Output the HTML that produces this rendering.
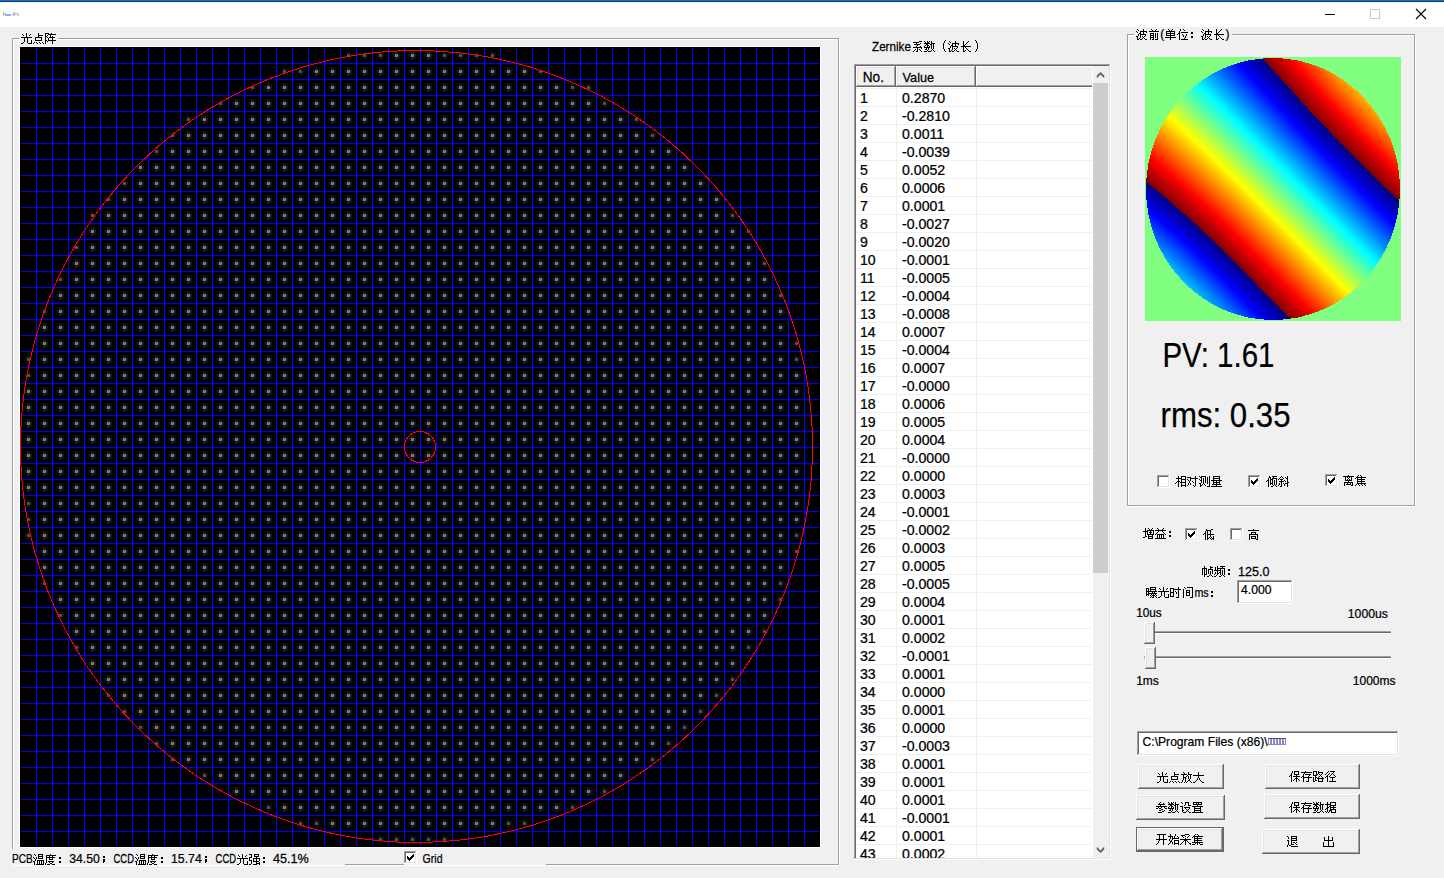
<!DOCTYPE html>
<html><head><meta charset="utf-8"><title>spot</title>
<style>
html,body{margin:0;padding:0;width:1444px;height:878px;overflow:hidden;background:#f0f0f0}
svg{display:block}
text{font-family:"Liberation Sans",sans-serif;stroke:currentColor;stroke-width:0.25px}
</style></head><body>
<svg width="1444" height="878" viewBox="0 0 1444 878" shape-rendering="crispEdges">
<defs><radialGradient id="glw"><stop offset="0" stop-color="#202020"/><stop offset="1" stop-color="#000"/></radialGradient><radialGradient id="glw2"><stop offset="0" stop-color="#141414"/><stop offset="1" stop-color="#000"/></radialGradient><pattern id="sp" x="20" y="47" width="16" height="16" patternUnits="userSpaceOnUse">
<circle cx="8.5" cy="8.5" r="5.5" fill="url(#glw)" shape-rendering="geometricPrecision"/>
<rect x="5" y="7" width="1" height="3" fill="#222222"/><rect x="11" y="7" width="1" height="3" fill="#222222"/>
<rect x="7" y="5" width="3" height="1" fill="#202020"/><rect x="7" y="11" width="3" height="1" fill="#202020"/>
<rect x="7" y="7" width="3" height="3" fill="#767676"/><rect x="8" y="7" width="1" height="3" fill="#828282"/><rect x="7" y="8" width="3" height="1" fill="#828282"/>
</pattern><pattern id="sp2" x="20" y="47" width="16" height="16" patternUnits="userSpaceOnUse">
<circle cx="8.5" cy="8.5" r="5.5" fill="url(#glw2)" shape-rendering="geometricPrecision"/>
<rect x="5" y="7" width="1" height="3" fill="#161616"/><rect x="11" y="7" width="1" height="3" fill="#161616"/>
<rect x="7" y="5" width="3" height="1" fill="#141414"/><rect x="7" y="11" width="3" height="1" fill="#141414"/>
<rect x="7" y="7" width="3" height="3" fill="#484848"/><rect x="8" y="7" width="1" height="3" fill="#545454"/><rect x="7" y="8" width="3" height="1" fill="#545454"/>
</pattern><clipPath id="ell"><rect x="1145" y="57" width="256" height="264"/></clipPath><linearGradient id="j0" gradientUnits="userSpaceOnUse" x1="1234.48" y1="27.61" x2="1108.99" y2="151.21" spreadMethod="repeat"><stop offset="0" stop-color="#000080"/><stop offset="0.125" stop-color="#0000ff"/><stop offset="0.375" stop-color="#00ffff"/><stop offset="0.625" stop-color="#ffff00"/><stop offset="0.875" stop-color="#ff0000"/><stop offset="1" stop-color="#800000"/></linearGradient><linearGradient id="j1" gradientUnits="userSpaceOnUse" x1="1237.16" y1="30.58" x2="1112.10" y2="153.77" spreadMethod="repeat"><stop offset="0" stop-color="#000080"/><stop offset="0.125" stop-color="#0000ff"/><stop offset="0.375" stop-color="#00ffff"/><stop offset="0.625" stop-color="#ffff00"/><stop offset="0.875" stop-color="#ff0000"/><stop offset="1" stop-color="#800000"/></linearGradient><linearGradient id="j2" gradientUnits="userSpaceOnUse" x1="1239.85" y1="33.55" x2="1115.20" y2="156.32" spreadMethod="repeat"><stop offset="0" stop-color="#000080"/><stop offset="0.125" stop-color="#0000ff"/><stop offset="0.375" stop-color="#00ffff"/><stop offset="0.625" stop-color="#ffff00"/><stop offset="0.875" stop-color="#ff0000"/><stop offset="1" stop-color="#800000"/></linearGradient><linearGradient id="j3" gradientUnits="userSpaceOnUse" x1="1242.54" y1="36.51" x2="1118.31" y2="158.88" spreadMethod="repeat"><stop offset="0" stop-color="#000080"/><stop offset="0.125" stop-color="#0000ff"/><stop offset="0.375" stop-color="#00ffff"/><stop offset="0.625" stop-color="#ffff00"/><stop offset="0.875" stop-color="#ff0000"/><stop offset="1" stop-color="#800000"/></linearGradient><linearGradient id="j4" gradientUnits="userSpaceOnUse" x1="1245.23" y1="39.48" x2="1121.41" y2="161.44" spreadMethod="repeat"><stop offset="0" stop-color="#000080"/><stop offset="0.125" stop-color="#0000ff"/><stop offset="0.375" stop-color="#00ffff"/><stop offset="0.625" stop-color="#ffff00"/><stop offset="0.875" stop-color="#ff0000"/><stop offset="1" stop-color="#800000"/></linearGradient><linearGradient id="j5" gradientUnits="userSpaceOnUse" x1="1247.92" y1="42.44" x2="1124.52" y2="163.99" spreadMethod="repeat"><stop offset="0" stop-color="#000080"/><stop offset="0.125" stop-color="#0000ff"/><stop offset="0.375" stop-color="#00ffff"/><stop offset="0.625" stop-color="#ffff00"/><stop offset="0.875" stop-color="#ff0000"/><stop offset="1" stop-color="#800000"/></linearGradient><linearGradient id="j6" gradientUnits="userSpaceOnUse" x1="1250.61" y1="45.41" x2="1127.62" y2="166.55" spreadMethod="repeat"><stop offset="0" stop-color="#000080"/><stop offset="0.125" stop-color="#0000ff"/><stop offset="0.375" stop-color="#00ffff"/><stop offset="0.625" stop-color="#ffff00"/><stop offset="0.875" stop-color="#ff0000"/><stop offset="1" stop-color="#800000"/></linearGradient><linearGradient id="j7" gradientUnits="userSpaceOnUse" x1="1253.30" y1="48.38" x2="1130.73" y2="169.11" spreadMethod="repeat"><stop offset="0" stop-color="#000080"/><stop offset="0.125" stop-color="#0000ff"/><stop offset="0.375" stop-color="#00ffff"/><stop offset="0.625" stop-color="#ffff00"/><stop offset="0.875" stop-color="#ff0000"/><stop offset="1" stop-color="#800000"/></linearGradient><linearGradient id="j8" gradientUnits="userSpaceOnUse" x1="1255.99" y1="51.34" x2="1133.83" y2="171.66" spreadMethod="repeat"><stop offset="0" stop-color="#000080"/><stop offset="0.125" stop-color="#0000ff"/><stop offset="0.375" stop-color="#00ffff"/><stop offset="0.625" stop-color="#ffff00"/><stop offset="0.875" stop-color="#ff0000"/><stop offset="1" stop-color="#800000"/></linearGradient><linearGradient id="j9" gradientUnits="userSpaceOnUse" x1="1258.68" y1="54.31" x2="1136.94" y2="174.22" spreadMethod="repeat"><stop offset="0" stop-color="#000080"/><stop offset="0.125" stop-color="#0000ff"/><stop offset="0.375" stop-color="#00ffff"/><stop offset="0.625" stop-color="#ffff00"/><stop offset="0.875" stop-color="#ff0000"/><stop offset="1" stop-color="#800000"/></linearGradient><linearGradient id="j10" gradientUnits="userSpaceOnUse" x1="1261.36" y1="57.28" x2="1140.04" y2="176.78" spreadMethod="repeat"><stop offset="0" stop-color="#000080"/><stop offset="0.125" stop-color="#0000ff"/><stop offset="0.375" stop-color="#00ffff"/><stop offset="0.625" stop-color="#ffff00"/><stop offset="0.875" stop-color="#ff0000"/><stop offset="1" stop-color="#800000"/></linearGradient><linearGradient id="j11" gradientUnits="userSpaceOnUse" x1="1264.05" y1="60.24" x2="1143.15" y2="179.33" spreadMethod="repeat"><stop offset="0" stop-color="#000080"/><stop offset="0.125" stop-color="#0000ff"/><stop offset="0.375" stop-color="#00ffff"/><stop offset="0.625" stop-color="#ffff00"/><stop offset="0.875" stop-color="#ff0000"/><stop offset="1" stop-color="#800000"/></linearGradient><linearGradient id="j12" gradientUnits="userSpaceOnUse" x1="1266.74" y1="63.21" x2="1146.25" y2="181.89" spreadMethod="repeat"><stop offset="0" stop-color="#000080"/><stop offset="0.125" stop-color="#0000ff"/><stop offset="0.375" stop-color="#00ffff"/><stop offset="0.625" stop-color="#ffff00"/><stop offset="0.875" stop-color="#ff0000"/><stop offset="1" stop-color="#800000"/></linearGradient><linearGradient id="j13" gradientUnits="userSpaceOnUse" x1="1269.43" y1="66.18" x2="1149.36" y2="184.45" spreadMethod="repeat"><stop offset="0" stop-color="#000080"/><stop offset="0.125" stop-color="#0000ff"/><stop offset="0.375" stop-color="#00ffff"/><stop offset="0.625" stop-color="#ffff00"/><stop offset="0.875" stop-color="#ff0000"/><stop offset="1" stop-color="#800000"/></linearGradient><linearGradient id="j14" gradientUnits="userSpaceOnUse" x1="1272.12" y1="69.14" x2="1152.46" y2="187.00" spreadMethod="repeat"><stop offset="0" stop-color="#000080"/><stop offset="0.125" stop-color="#0000ff"/><stop offset="0.375" stop-color="#00ffff"/><stop offset="0.625" stop-color="#ffff00"/><stop offset="0.875" stop-color="#ff0000"/><stop offset="1" stop-color="#800000"/></linearGradient><linearGradient id="j15" gradientUnits="userSpaceOnUse" x1="1274.81" y1="72.11" x2="1155.57" y2="189.56" spreadMethod="repeat"><stop offset="0" stop-color="#000080"/><stop offset="0.125" stop-color="#0000ff"/><stop offset="0.375" stop-color="#00ffff"/><stop offset="0.625" stop-color="#ffff00"/><stop offset="0.875" stop-color="#ff0000"/><stop offset="1" stop-color="#800000"/></linearGradient><linearGradient id="j16" gradientUnits="userSpaceOnUse" x1="1277.50" y1="75.08" x2="1158.68" y2="192.11" spreadMethod="repeat"><stop offset="0" stop-color="#000080"/><stop offset="0.125" stop-color="#0000ff"/><stop offset="0.375" stop-color="#00ffff"/><stop offset="0.625" stop-color="#ffff00"/><stop offset="0.875" stop-color="#ff0000"/><stop offset="1" stop-color="#800000"/></linearGradient><linearGradient id="j17" gradientUnits="userSpaceOnUse" x1="1280.19" y1="78.04" x2="1161.78" y2="194.67" spreadMethod="repeat"><stop offset="0" stop-color="#000080"/><stop offset="0.125" stop-color="#0000ff"/><stop offset="0.375" stop-color="#00ffff"/><stop offset="0.625" stop-color="#ffff00"/><stop offset="0.875" stop-color="#ff0000"/><stop offset="1" stop-color="#800000"/></linearGradient><linearGradient id="j18" gradientUnits="userSpaceOnUse" x1="1282.88" y1="81.01" x2="1164.89" y2="197.23" spreadMethod="repeat"><stop offset="0" stop-color="#000080"/><stop offset="0.125" stop-color="#0000ff"/><stop offset="0.375" stop-color="#00ffff"/><stop offset="0.625" stop-color="#ffff00"/><stop offset="0.875" stop-color="#ff0000"/><stop offset="1" stop-color="#800000"/></linearGradient><linearGradient id="j19" gradientUnits="userSpaceOnUse" x1="1285.56" y1="83.98" x2="1167.94" y2="199.83" spreadMethod="repeat"><stop offset="0" stop-color="#000080"/><stop offset="0.125" stop-color="#0000ff"/><stop offset="0.375" stop-color="#00ffff"/><stop offset="0.625" stop-color="#ffff00"/><stop offset="0.875" stop-color="#ff0000"/><stop offset="1" stop-color="#800000"/></linearGradient><linearGradient id="j20" gradientUnits="userSpaceOnUse" x1="1288.25" y1="86.94" x2="1170.93" y2="202.50" spreadMethod="repeat"><stop offset="0" stop-color="#000080"/><stop offset="0.125" stop-color="#0000ff"/><stop offset="0.375" stop-color="#00ffff"/><stop offset="0.625" stop-color="#ffff00"/><stop offset="0.875" stop-color="#ff0000"/><stop offset="1" stop-color="#800000"/></linearGradient><linearGradient id="j21" gradientUnits="userSpaceOnUse" x1="1290.94" y1="89.91" x2="1173.92" y2="205.17" spreadMethod="repeat"><stop offset="0" stop-color="#000080"/><stop offset="0.125" stop-color="#0000ff"/><stop offset="0.375" stop-color="#00ffff"/><stop offset="0.625" stop-color="#ffff00"/><stop offset="0.875" stop-color="#ff0000"/><stop offset="1" stop-color="#800000"/></linearGradient><linearGradient id="j22" gradientUnits="userSpaceOnUse" x1="1293.63" y1="92.88" x2="1176.91" y2="207.84" spreadMethod="repeat"><stop offset="0" stop-color="#000080"/><stop offset="0.125" stop-color="#0000ff"/><stop offset="0.375" stop-color="#00ffff"/><stop offset="0.625" stop-color="#ffff00"/><stop offset="0.875" stop-color="#ff0000"/><stop offset="1" stop-color="#800000"/></linearGradient><linearGradient id="j23" gradientUnits="userSpaceOnUse" x1="1296.32" y1="95.84" x2="1179.90" y2="210.51" spreadMethod="repeat"><stop offset="0" stop-color="#000080"/><stop offset="0.125" stop-color="#0000ff"/><stop offset="0.375" stop-color="#00ffff"/><stop offset="0.625" stop-color="#ffff00"/><stop offset="0.875" stop-color="#ff0000"/><stop offset="1" stop-color="#800000"/></linearGradient><linearGradient id="j24" gradientUnits="userSpaceOnUse" x1="1299.01" y1="98.81" x2="1182.89" y2="213.18" spreadMethod="repeat"><stop offset="0" stop-color="#000080"/><stop offset="0.125" stop-color="#0000ff"/><stop offset="0.375" stop-color="#00ffff"/><stop offset="0.625" stop-color="#ffff00"/><stop offset="0.875" stop-color="#ff0000"/><stop offset="1" stop-color="#800000"/></linearGradient><linearGradient id="j25" gradientUnits="userSpaceOnUse" x1="1301.65" y1="101.83" x2="1185.89" y2="215.84" spreadMethod="repeat"><stop offset="0" stop-color="#000080"/><stop offset="0.125" stop-color="#0000ff"/><stop offset="0.375" stop-color="#00ffff"/><stop offset="0.625" stop-color="#ffff00"/><stop offset="0.875" stop-color="#ff0000"/><stop offset="1" stop-color="#800000"/></linearGradient><linearGradient id="j26" gradientUnits="userSpaceOnUse" x1="1304.28" y1="104.85" x2="1188.90" y2="218.50" spreadMethod="repeat"><stop offset="0" stop-color="#000080"/><stop offset="0.125" stop-color="#0000ff"/><stop offset="0.375" stop-color="#00ffff"/><stop offset="0.625" stop-color="#ffff00"/><stop offset="0.875" stop-color="#ff0000"/><stop offset="1" stop-color="#800000"/></linearGradient><linearGradient id="j27" gradientUnits="userSpaceOnUse" x1="1306.91" y1="107.87" x2="1191.90" y2="221.15" spreadMethod="repeat"><stop offset="0" stop-color="#000080"/><stop offset="0.125" stop-color="#0000ff"/><stop offset="0.375" stop-color="#00ffff"/><stop offset="0.625" stop-color="#ffff00"/><stop offset="0.875" stop-color="#ff0000"/><stop offset="1" stop-color="#800000"/></linearGradient><linearGradient id="j28" gradientUnits="userSpaceOnUse" x1="1309.55" y1="110.89" x2="1194.91" y2="223.81" spreadMethod="repeat"><stop offset="0" stop-color="#000080"/><stop offset="0.125" stop-color="#0000ff"/><stop offset="0.375" stop-color="#00ffff"/><stop offset="0.625" stop-color="#ffff00"/><stop offset="0.875" stop-color="#ff0000"/><stop offset="1" stop-color="#800000"/></linearGradient><linearGradient id="j29" gradientUnits="userSpaceOnUse" x1="1312.31" y1="113.78" x2="1197.91" y2="226.46" spreadMethod="repeat"><stop offset="0" stop-color="#000080"/><stop offset="0.125" stop-color="#0000ff"/><stop offset="0.375" stop-color="#00ffff"/><stop offset="0.625" stop-color="#ffff00"/><stop offset="0.875" stop-color="#ff0000"/><stop offset="1" stop-color="#800000"/></linearGradient><linearGradient id="j30" gradientUnits="userSpaceOnUse" x1="1315.10" y1="116.65" x2="1200.92" y2="229.12" spreadMethod="repeat"><stop offset="0" stop-color="#000080"/><stop offset="0.125" stop-color="#0000ff"/><stop offset="0.375" stop-color="#00ffff"/><stop offset="0.625" stop-color="#ffff00"/><stop offset="0.875" stop-color="#ff0000"/><stop offset="1" stop-color="#800000"/></linearGradient><linearGradient id="j31" gradientUnits="userSpaceOnUse" x1="1317.88" y1="119.52" x2="1203.82" y2="231.87" spreadMethod="repeat"><stop offset="0" stop-color="#000080"/><stop offset="0.125" stop-color="#0000ff"/><stop offset="0.375" stop-color="#00ffff"/><stop offset="0.625" stop-color="#ffff00"/><stop offset="0.875" stop-color="#ff0000"/><stop offset="1" stop-color="#800000"/></linearGradient><linearGradient id="j32" gradientUnits="userSpaceOnUse" x1="1320.67" y1="122.39" x2="1206.67" y2="234.68" spreadMethod="repeat"><stop offset="0" stop-color="#000080"/><stop offset="0.125" stop-color="#0000ff"/><stop offset="0.375" stop-color="#00ffff"/><stop offset="0.625" stop-color="#ffff00"/><stop offset="0.875" stop-color="#ff0000"/><stop offset="1" stop-color="#800000"/></linearGradient><linearGradient id="j33" gradientUnits="userSpaceOnUse" x1="1323.46" y1="125.26" x2="1209.52" y2="237.49" spreadMethod="repeat"><stop offset="0" stop-color="#000080"/><stop offset="0.125" stop-color="#0000ff"/><stop offset="0.375" stop-color="#00ffff"/><stop offset="0.625" stop-color="#ffff00"/><stop offset="0.875" stop-color="#ff0000"/><stop offset="1" stop-color="#800000"/></linearGradient><linearGradient id="j34" gradientUnits="userSpaceOnUse" x1="1326.25" y1="128.13" x2="1212.37" y2="240.29" spreadMethod="repeat"><stop offset="0" stop-color="#000080"/><stop offset="0.125" stop-color="#0000ff"/><stop offset="0.375" stop-color="#00ffff"/><stop offset="0.625" stop-color="#ffff00"/><stop offset="0.875" stop-color="#ff0000"/><stop offset="1" stop-color="#800000"/></linearGradient><linearGradient id="j35" gradientUnits="userSpaceOnUse" x1="1329.04" y1="131.00" x2="1215.22" y2="243.10" spreadMethod="repeat"><stop offset="0" stop-color="#000080"/><stop offset="0.125" stop-color="#0000ff"/><stop offset="0.375" stop-color="#00ffff"/><stop offset="0.625" stop-color="#ffff00"/><stop offset="0.875" stop-color="#ff0000"/><stop offset="1" stop-color="#800000"/></linearGradient><linearGradient id="j36" gradientUnits="userSpaceOnUse" x1="1331.83" y1="133.86" x2="1218.08" y2="245.91" spreadMethod="repeat"><stop offset="0" stop-color="#000080"/><stop offset="0.125" stop-color="#0000ff"/><stop offset="0.375" stop-color="#00ffff"/><stop offset="0.625" stop-color="#ffff00"/><stop offset="0.875" stop-color="#ff0000"/><stop offset="1" stop-color="#800000"/></linearGradient><linearGradient id="j37" gradientUnits="userSpaceOnUse" x1="1334.62" y1="136.73" x2="1220.93" y2="248.72" spreadMethod="repeat"><stop offset="0" stop-color="#000080"/><stop offset="0.125" stop-color="#0000ff"/><stop offset="0.375" stop-color="#00ffff"/><stop offset="0.625" stop-color="#ffff00"/><stop offset="0.875" stop-color="#ff0000"/><stop offset="1" stop-color="#800000"/></linearGradient><linearGradient id="j38" gradientUnits="userSpaceOnUse" x1="1337.40" y1="139.60" x2="1223.78" y2="251.52" spreadMethod="repeat"><stop offset="0" stop-color="#000080"/><stop offset="0.125" stop-color="#0000ff"/><stop offset="0.375" stop-color="#00ffff"/><stop offset="0.625" stop-color="#ffff00"/><stop offset="0.875" stop-color="#ff0000"/><stop offset="1" stop-color="#800000"/></linearGradient><linearGradient id="j39" gradientUnits="userSpaceOnUse" x1="1340.19" y1="142.47" x2="1226.63" y2="254.33" spreadMethod="repeat"><stop offset="0" stop-color="#000080"/><stop offset="0.125" stop-color="#0000ff"/><stop offset="0.375" stop-color="#00ffff"/><stop offset="0.625" stop-color="#ffff00"/><stop offset="0.875" stop-color="#ff0000"/><stop offset="1" stop-color="#800000"/></linearGradient><linearGradient id="j40" gradientUnits="userSpaceOnUse" x1="1342.98" y1="145.34" x2="1229.48" y2="257.14" spreadMethod="repeat"><stop offset="0" stop-color="#000080"/><stop offset="0.125" stop-color="#0000ff"/><stop offset="0.375" stop-color="#00ffff"/><stop offset="0.625" stop-color="#ffff00"/><stop offset="0.875" stop-color="#ff0000"/><stop offset="1" stop-color="#800000"/></linearGradient><linearGradient id="j41" gradientUnits="userSpaceOnUse" x1="1345.77" y1="148.21" x2="1232.33" y2="259.94" spreadMethod="repeat"><stop offset="0" stop-color="#000080"/><stop offset="0.125" stop-color="#0000ff"/><stop offset="0.375" stop-color="#00ffff"/><stop offset="0.625" stop-color="#ffff00"/><stop offset="0.875" stop-color="#ff0000"/><stop offset="1" stop-color="#800000"/></linearGradient><linearGradient id="j42" gradientUnits="userSpaceOnUse" x1="1348.58" y1="151.05" x2="1235.18" y2="262.75" spreadMethod="repeat"><stop offset="0" stop-color="#000080"/><stop offset="0.125" stop-color="#0000ff"/><stop offset="0.375" stop-color="#00ffff"/><stop offset="0.625" stop-color="#ffff00"/><stop offset="0.875" stop-color="#ff0000"/><stop offset="1" stop-color="#800000"/></linearGradient><linearGradient id="j43" gradientUnits="userSpaceOnUse" x1="1351.42" y1="153.87" x2="1238.03" y2="265.56" spreadMethod="repeat"><stop offset="0" stop-color="#000080"/><stop offset="0.125" stop-color="#0000ff"/><stop offset="0.375" stop-color="#00ffff"/><stop offset="0.625" stop-color="#ffff00"/><stop offset="0.875" stop-color="#ff0000"/><stop offset="1" stop-color="#800000"/></linearGradient><linearGradient id="j44" gradientUnits="userSpaceOnUse" x1="1354.26" y1="156.68" x2="1240.85" y2="268.39" spreadMethod="repeat"><stop offset="0" stop-color="#000080"/><stop offset="0.125" stop-color="#0000ff"/><stop offset="0.375" stop-color="#00ffff"/><stop offset="0.625" stop-color="#ffff00"/><stop offset="0.875" stop-color="#ff0000"/><stop offset="1" stop-color="#800000"/></linearGradient><linearGradient id="j45" gradientUnits="userSpaceOnUse" x1="1357.10" y1="159.50" x2="1243.64" y2="271.26" spreadMethod="repeat"><stop offset="0" stop-color="#000080"/><stop offset="0.125" stop-color="#0000ff"/><stop offset="0.375" stop-color="#00ffff"/><stop offset="0.625" stop-color="#ffff00"/><stop offset="0.875" stop-color="#ff0000"/><stop offset="1" stop-color="#800000"/></linearGradient><linearGradient id="j46" gradientUnits="userSpaceOnUse" x1="1359.95" y1="162.32" x2="1246.43" y2="274.13" spreadMethod="repeat"><stop offset="0" stop-color="#000080"/><stop offset="0.125" stop-color="#0000ff"/><stop offset="0.375" stop-color="#00ffff"/><stop offset="0.625" stop-color="#ffff00"/><stop offset="0.875" stop-color="#ff0000"/><stop offset="1" stop-color="#800000"/></linearGradient><linearGradient id="j47" gradientUnits="userSpaceOnUse" x1="1362.79" y1="165.13" x2="1249.22" y2="277.00" spreadMethod="repeat"><stop offset="0" stop-color="#000080"/><stop offset="0.125" stop-color="#0000ff"/><stop offset="0.375" stop-color="#00ffff"/><stop offset="0.625" stop-color="#ffff00"/><stop offset="0.875" stop-color="#ff0000"/><stop offset="1" stop-color="#800000"/></linearGradient><linearGradient id="j48" gradientUnits="userSpaceOnUse" x1="1365.63" y1="167.94" x2="1252.01" y2="279.86" spreadMethod="repeat"><stop offset="0" stop-color="#000080"/><stop offset="0.125" stop-color="#0000ff"/><stop offset="0.375" stop-color="#00ffff"/><stop offset="0.625" stop-color="#ffff00"/><stop offset="0.875" stop-color="#ff0000"/><stop offset="1" stop-color="#800000"/></linearGradient><linearGradient id="j49" gradientUnits="userSpaceOnUse" x1="1368.48" y1="170.76" x2="1254.80" y2="282.73" spreadMethod="repeat"><stop offset="0" stop-color="#000080"/><stop offset="0.125" stop-color="#0000ff"/><stop offset="0.375" stop-color="#00ffff"/><stop offset="0.625" stop-color="#ffff00"/><stop offset="0.875" stop-color="#ff0000"/><stop offset="1" stop-color="#800000"/></linearGradient><linearGradient id="j50" gradientUnits="userSpaceOnUse" x1="1371.32" y1="173.57" x2="1257.59" y2="285.60" spreadMethod="repeat"><stop offset="0" stop-color="#000080"/><stop offset="0.125" stop-color="#0000ff"/><stop offset="0.375" stop-color="#00ffff"/><stop offset="0.625" stop-color="#ffff00"/><stop offset="0.875" stop-color="#ff0000"/><stop offset="1" stop-color="#800000"/></linearGradient><linearGradient id="j51" gradientUnits="userSpaceOnUse" x1="1374.17" y1="176.38" x2="1260.38" y2="288.47" spreadMethod="repeat"><stop offset="0" stop-color="#000080"/><stop offset="0.125" stop-color="#0000ff"/><stop offset="0.375" stop-color="#00ffff"/><stop offset="0.625" stop-color="#ffff00"/><stop offset="0.875" stop-color="#ff0000"/><stop offset="1" stop-color="#800000"/></linearGradient><linearGradient id="j52" gradientUnits="userSpaceOnUse" x1="1377.01" y1="179.20" x2="1263.17" y2="291.34" spreadMethod="repeat"><stop offset="0" stop-color="#000080"/><stop offset="0.125" stop-color="#0000ff"/><stop offset="0.375" stop-color="#00ffff"/><stop offset="0.625" stop-color="#ffff00"/><stop offset="0.875" stop-color="#ff0000"/><stop offset="1" stop-color="#800000"/></linearGradient><linearGradient id="j53" gradientUnits="userSpaceOnUse" x1="1379.86" y1="182.01" x2="1265.95" y2="294.20" spreadMethod="repeat"><stop offset="0" stop-color="#000080"/><stop offset="0.125" stop-color="#0000ff"/><stop offset="0.375" stop-color="#00ffff"/><stop offset="0.625" stop-color="#ffff00"/><stop offset="0.875" stop-color="#ff0000"/><stop offset="1" stop-color="#800000"/></linearGradient><linearGradient id="j54" gradientUnits="userSpaceOnUse" x1="1382.70" y1="184.82" x2="1268.74" y2="297.07" spreadMethod="repeat"><stop offset="0" stop-color="#000080"/><stop offset="0.125" stop-color="#0000ff"/><stop offset="0.375" stop-color="#00ffff"/><stop offset="0.625" stop-color="#ffff00"/><stop offset="0.875" stop-color="#ff0000"/><stop offset="1" stop-color="#800000"/></linearGradient><linearGradient id="j55" gradientUnits="userSpaceOnUse" x1="1385.55" y1="187.64" x2="1271.53" y2="299.94" spreadMethod="repeat"><stop offset="0" stop-color="#000080"/><stop offset="0.125" stop-color="#0000ff"/><stop offset="0.375" stop-color="#00ffff"/><stop offset="0.625" stop-color="#ffff00"/><stop offset="0.875" stop-color="#ff0000"/><stop offset="1" stop-color="#800000"/></linearGradient><linearGradient id="j56" gradientUnits="userSpaceOnUse" x1="1388.39" y1="190.45" x2="1274.32" y2="302.81" spreadMethod="repeat"><stop offset="0" stop-color="#000080"/><stop offset="0.125" stop-color="#0000ff"/><stop offset="0.375" stop-color="#00ffff"/><stop offset="0.625" stop-color="#ffff00"/><stop offset="0.875" stop-color="#ff0000"/><stop offset="1" stop-color="#800000"/></linearGradient><linearGradient id="j57" gradientUnits="userSpaceOnUse" x1="1391.24" y1="193.26" x2="1277.11" y2="305.67" spreadMethod="repeat"><stop offset="0" stop-color="#000080"/><stop offset="0.125" stop-color="#0000ff"/><stop offset="0.375" stop-color="#00ffff"/><stop offset="0.625" stop-color="#ffff00"/><stop offset="0.875" stop-color="#ff0000"/><stop offset="1" stop-color="#800000"/></linearGradient><linearGradient id="j58" gradientUnits="userSpaceOnUse" x1="1394.08" y1="196.08" x2="1279.90" y2="308.54" spreadMethod="repeat"><stop offset="0" stop-color="#000080"/><stop offset="0.125" stop-color="#0000ff"/><stop offset="0.375" stop-color="#00ffff"/><stop offset="0.625" stop-color="#ffff00"/><stop offset="0.875" stop-color="#ff0000"/><stop offset="1" stop-color="#800000"/></linearGradient><linearGradient id="j59" gradientUnits="userSpaceOnUse" x1="1396.93" y1="198.89" x2="1282.69" y2="311.41" spreadMethod="repeat"><stop offset="0" stop-color="#000080"/><stop offset="0.125" stop-color="#0000ff"/><stop offset="0.375" stop-color="#00ffff"/><stop offset="0.625" stop-color="#ffff00"/><stop offset="0.875" stop-color="#ff0000"/><stop offset="1" stop-color="#800000"/></linearGradient><linearGradient id="j60" gradientUnits="userSpaceOnUse" x1="1399.77" y1="201.70" x2="1285.48" y2="314.28" spreadMethod="repeat"><stop offset="0" stop-color="#000080"/><stop offset="0.125" stop-color="#0000ff"/><stop offset="0.375" stop-color="#00ffff"/><stop offset="0.625" stop-color="#ffff00"/><stop offset="0.875" stop-color="#ff0000"/><stop offset="1" stop-color="#800000"/></linearGradient><linearGradient id="j61" gradientUnits="userSpaceOnUse" x1="1402.61" y1="204.52" x2="1288.27" y2="317.14" spreadMethod="repeat"><stop offset="0" stop-color="#000080"/><stop offset="0.125" stop-color="#0000ff"/><stop offset="0.375" stop-color="#00ffff"/><stop offset="0.625" stop-color="#ffff00"/><stop offset="0.875" stop-color="#ff0000"/><stop offset="1" stop-color="#800000"/></linearGradient><linearGradient id="j62" gradientUnits="userSpaceOnUse" x1="1405.46" y1="207.33" x2="1291.06" y2="320.01" spreadMethod="repeat"><stop offset="0" stop-color="#000080"/><stop offset="0.125" stop-color="#0000ff"/><stop offset="0.375" stop-color="#00ffff"/><stop offset="0.625" stop-color="#ffff00"/><stop offset="0.875" stop-color="#ff0000"/><stop offset="1" stop-color="#800000"/></linearGradient><linearGradient id="j63" gradientUnits="userSpaceOnUse" x1="1408.30" y1="210.14" x2="1293.85" y2="322.88" spreadMethod="repeat"><stop offset="0" stop-color="#000080"/><stop offset="0.125" stop-color="#0000ff"/><stop offset="0.375" stop-color="#00ffff"/><stop offset="0.625" stop-color="#ffff00"/><stop offset="0.875" stop-color="#ff0000"/><stop offset="1" stop-color="#800000"/></linearGradient><linearGradient id="j64" gradientUnits="userSpaceOnUse" x1="1411.15" y1="212.95" x2="1296.64" y2="325.75" spreadMethod="repeat"><stop offset="0" stop-color="#000080"/><stop offset="0.125" stop-color="#0000ff"/><stop offset="0.375" stop-color="#00ffff"/><stop offset="0.625" stop-color="#ffff00"/><stop offset="0.875" stop-color="#ff0000"/><stop offset="1" stop-color="#800000"/></linearGradient><linearGradient id="j65" gradientUnits="userSpaceOnUse" x1="1413.99" y1="215.77" x2="1299.43" y2="328.61" spreadMethod="repeat"><stop offset="0" stop-color="#000080"/><stop offset="0.125" stop-color="#0000ff"/><stop offset="0.375" stop-color="#00ffff"/><stop offset="0.625" stop-color="#ffff00"/><stop offset="0.875" stop-color="#ff0000"/><stop offset="1" stop-color="#800000"/></linearGradient><linearGradient id="j66" gradientUnits="userSpaceOnUse" x1="1416.84" y1="218.58" x2="1302.22" y2="331.48" spreadMethod="repeat"><stop offset="0" stop-color="#000080"/><stop offset="0.125" stop-color="#0000ff"/><stop offset="0.375" stop-color="#00ffff"/><stop offset="0.625" stop-color="#ffff00"/><stop offset="0.875" stop-color="#ff0000"/><stop offset="1" stop-color="#800000"/></linearGradient><linearGradient id="j67" gradientUnits="userSpaceOnUse" x1="1419.68" y1="221.39" x2="1305.00" y2="334.35" spreadMethod="repeat"><stop offset="0" stop-color="#000080"/><stop offset="0.125" stop-color="#0000ff"/><stop offset="0.375" stop-color="#00ffff"/><stop offset="0.625" stop-color="#ffff00"/><stop offset="0.875" stop-color="#ff0000"/><stop offset="1" stop-color="#800000"/></linearGradient><linearGradient id="j68" gradientUnits="userSpaceOnUse" x1="1422.53" y1="224.21" x2="1307.79" y2="337.22" spreadMethod="repeat"><stop offset="0" stop-color="#000080"/><stop offset="0.125" stop-color="#0000ff"/><stop offset="0.375" stop-color="#00ffff"/><stop offset="0.625" stop-color="#ffff00"/><stop offset="0.875" stop-color="#ff0000"/><stop offset="1" stop-color="#800000"/></linearGradient><linearGradient id="j69" gradientUnits="userSpaceOnUse" x1="1425.37" y1="227.02" x2="1310.58" y2="340.08" spreadMethod="repeat"><stop offset="0" stop-color="#000080"/><stop offset="0.125" stop-color="#0000ff"/><stop offset="0.375" stop-color="#00ffff"/><stop offset="0.625" stop-color="#ffff00"/><stop offset="0.875" stop-color="#ff0000"/><stop offset="1" stop-color="#800000"/></linearGradient><linearGradient id="j70" gradientUnits="userSpaceOnUse" x1="1428.22" y1="229.83" x2="1313.37" y2="342.95" spreadMethod="repeat"><stop offset="0" stop-color="#000080"/><stop offset="0.125" stop-color="#0000ff"/><stop offset="0.375" stop-color="#00ffff"/><stop offset="0.625" stop-color="#ffff00"/><stop offset="0.875" stop-color="#ff0000"/><stop offset="1" stop-color="#800000"/></linearGradient><linearGradient id="j71" gradientUnits="userSpaceOnUse" x1="1431.06" y1="232.65" x2="1316.16" y2="345.82" spreadMethod="repeat"><stop offset="0" stop-color="#000080"/><stop offset="0.125" stop-color="#0000ff"/><stop offset="0.375" stop-color="#00ffff"/><stop offset="0.625" stop-color="#ffff00"/><stop offset="0.875" stop-color="#ff0000"/><stop offset="1" stop-color="#800000"/></linearGradient></defs>
<rect x="0" y="0" width="1444" height="27" fill="#ffffff"/>
<rect x="0" y="0" width="1444" height="1" fill="#0a72cc"/>
<rect x="0" y="1" width="1444" height="1" fill="#1c3d5c"/>
<rect x="0" y="2" width="1444" height="1" fill="#f2f4f6"/>
<rect x="3" y="12" width="1" height="4" fill="#f3b27a"/>
<rect x="4" y="13" width="2" height="2" fill="#a9c4ee"/>
<rect x="5" y="14" width="6" height="2" fill="#8fb3ea"/>
<rect x="11" y="14" width="2" height="1" fill="#c6d8f4"/>
<rect x="13" y="12" width="2" height="4" fill="#a9c4ee"/>
<rect x="15" y="13" width="2" height="2" fill="#f3c08f"/>
<rect x="17" y="13" width="2" height="3" fill="#bcd2f2"/>
<rect x="1325" y="14" width="10" height="1" fill="#000000"/>
<rect x="1370.5" y="9.5" width="9" height="9" fill="none" stroke="#c8c8c8" stroke-width="1"/>
<path d="M1416 9L1426 19M1426 9L1416 19" stroke="#000" stroke-width="1.1" fill="none" shape-rendering="geometricPrecision"/>
<rect x="12" y="38" width="827" height="1" fill="#a0a0a0"/>
<rect x="12" y="38" width="1" height="827" fill="#a0a0a0"/>
<rect x="12" y="865" width="828" height="1" fill="#ffffff"/>
<rect x="839" y="38" width="1" height="828" fill="#ffffff"/>
<rect x="13" y="39" width="825" height="1" fill="#ffffff"/>
<rect x="13" y="39" width="1" height="825" fill="#ffffff"/>
<rect x="13" y="864" width="826" height="1" fill="#a0a0a0"/>
<rect x="838" y="39" width="1" height="826" fill="#a0a0a0"/>
<rect x="19" y="31" width="39" height="12" fill="#f0f0f0"/>
<rect x="19" y="46" width="802" height="802" fill="#ffffff"/>
<rect x="20" y="47" width="800" height="800" fill="#000000"/>
<path d="M388 47h48v16h-48zM308 63h224v16h-224zM260 79h304v16h-304zM228 95h368v16h-368zM196 111h432v16h-432zM180 127h464v16h-464zM164 143h512v16h-512zM132 159h560v16h-560zM132 175h576v16h-576zM116 191h608v16h-608zM100 207h624v16h-624zM84 223h656v16h-656zM84 239h672v16h-672zM68 255h688v16h-688zM68 271h704v16h-704zM52 287h720v16h-720zM52 303h736v16h-736zM36 319h752v16h-752zM36 335h752v16h-752zM36 351h752v16h-752zM36 367h768v16h-768zM20 383h784v16h-784zM20 399h784v16h-784zM20 415h784v16h-784zM20 431h784v16h-784zM20 447h784v16h-784zM20 463h784v16h-784zM20 479h784v16h-784zM36 495h768v16h-768zM36 511h768v16h-768zM36 527h752v16h-752zM36 543h752v16h-752zM36 559h752v16h-752zM52 575h720v16h-720zM52 591h720v16h-720zM68 607h704v16h-704zM68 623h688v16h-688zM84 639h656v16h-656zM84 655h656v16h-656zM100 671h624v16h-624zM116 687h592v16h-592zM132 703h560v16h-560zM148 719h528v16h-528zM164 735h496v16h-496zM180 751h464v16h-464zM212 767h416v16h-416zM228 783h368v16h-368zM276 799h288v16h-288zM324 815h176v16h-176z" fill="url(#sp)"/>
<path d="M340 47h48v16h-48zM436 47h64v16h-64zM276 63h32v16h-32zM532 63h16v16h-16zM244 79h16v16h-16zM564 79h32v16h-32zM212 95h16v16h-16zM596 95h16v16h-16zM180 111h16v16h-16zM628 111h16v16h-16zM164 127h16v16h-16zM644 127h16v16h-16zM148 143h16v16h-16zM116 175h16v16h-16zM100 191h16v16h-16zM84 207h16v16h-16zM724 207h16v16h-16zM740 223h16v16h-16zM68 239h16v16h-16zM756 255h16v16h-16zM52 271h16v16h-16zM772 287h16v16h-16zM36 303h16v16h-16zM788 335h16v16h-16zM20 351h16v16h-16zM788 351h16v16h-16zM20 367h16v16h-16zM20 495h16v16h-16zM20 511h16v16h-16zM20 527h16v16h-16zM788 527h16v16h-16zM788 543h16v16h-16zM36 575h16v16h-16zM772 575h16v16h-16zM772 591h16v16h-16zM52 607h16v16h-16zM756 623h16v16h-16zM68 639h16v16h-16zM740 639h16v16h-16zM724 671h16v16h-16zM100 687h16v16h-16zM708 687h16v16h-16zM116 703h16v16h-16zM692 703h16v16h-16zM132 719h16v16h-16zM676 719h16v16h-16zM148 735h16v16h-16zM660 735h16v16h-16zM164 751h16v16h-16zM644 751h16v16h-16zM196 767h16v16h-16zM596 783h16v16h-16zM260 799h16v16h-16zM564 799h16v16h-16zM292 815h32v16h-32zM500 815h32v16h-32zM372 831h80v16h-80z" fill="url(#sp2)"/>
<path d="M36 48h1v798h-1zM21 63h798v1h-798zM52 48h1v798h-1zM21 79h798v1h-798zM68 48h1v798h-1zM21 95h798v1h-798zM84 48h1v798h-1zM21 111h798v1h-798zM100 48h1v798h-1zM21 127h798v1h-798zM116 48h1v798h-1zM21 143h798v1h-798zM132 48h1v798h-1zM21 159h798v1h-798zM148 48h1v798h-1zM21 175h798v1h-798zM164 48h1v798h-1zM21 191h798v1h-798zM180 48h1v798h-1zM21 207h798v1h-798zM196 48h1v798h-1zM21 223h798v1h-798zM212 48h1v798h-1zM21 239h798v1h-798zM228 48h1v798h-1zM21 255h798v1h-798zM244 48h1v798h-1zM21 271h798v1h-798zM260 48h1v798h-1zM21 287h798v1h-798zM276 48h1v798h-1zM21 303h798v1h-798zM292 48h1v798h-1zM21 319h798v1h-798zM308 48h1v798h-1zM21 335h798v1h-798zM324 48h1v798h-1zM21 351h798v1h-798zM340 48h1v798h-1zM21 367h798v1h-798zM356 48h1v798h-1zM21 383h798v1h-798zM372 48h1v798h-1zM21 399h798v1h-798zM388 48h1v798h-1zM21 415h798v1h-798zM404 48h1v798h-1zM21 431h798v1h-798zM420 48h1v798h-1zM21 447h798v1h-798zM436 48h1v798h-1zM21 463h798v1h-798zM452 48h1v798h-1zM21 479h798v1h-798zM468 48h1v798h-1zM21 495h798v1h-798zM484 48h1v798h-1zM21 511h798v1h-798zM500 48h1v798h-1zM21 527h798v1h-798zM516 48h1v798h-1zM21 543h798v1h-798zM532 48h1v798h-1zM21 559h798v1h-798zM548 48h1v798h-1zM21 575h798v1h-798zM564 48h1v798h-1zM21 591h798v1h-798zM580 48h1v798h-1zM21 607h798v1h-798zM596 48h1v798h-1zM21 623h798v1h-798zM612 48h1v798h-1zM21 639h798v1h-798zM628 48h1v798h-1zM21 655h798v1h-798zM644 48h1v798h-1zM21 671h798v1h-798zM660 48h1v798h-1zM21 687h798v1h-798zM676 48h1v798h-1zM21 703h798v1h-798zM692 48h1v798h-1zM21 719h798v1h-798zM708 48h1v798h-1zM21 735h798v1h-798zM724 48h1v798h-1zM21 751h798v1h-798zM740 48h1v798h-1zM21 767h798v1h-798zM756 48h1v798h-1zM21 783h798v1h-798zM772 48h1v798h-1zM21 799h798v1h-798zM788 48h1v798h-1zM21 815h798v1h-798zM804 48h1v798h-1zM21 831h798v1h-798z" fill="#0000ff"/>
<circle cx="416.5" cy="446.5" r="396" fill="none" stroke="#ff0000" stroke-width="1"/>
<circle cx="420" cy="447" r="15.5" fill="none" stroke="#ff0000" stroke-width="1"/>
<rect x="12" y="849" width="333" height="16" fill="#f0f0f0"/>
<rect x="404" y="849" width="142" height="16" fill="#f0f0f0"/>
<rect x="404" y="851" width="13" height="13" fill="#ffffff"/>
<rect x="404" y="851" width="12" height="1" fill="#a0a0a0"/>
<rect x="404" y="851" width="1" height="12" fill="#a0a0a0"/>
<rect x="405" y="852" width="10" height="1" fill="#696969"/>
<rect x="405" y="852" width="1" height="10" fill="#696969"/>
<rect x="405" y="862" width="11" height="1" fill="#e3e3e3"/>
<rect x="415" y="852" width="1" height="11" fill="#e3e3e3"/>
<rect x="404" y="863" width="13" height="1" fill="#ffffff"/>
<rect x="416" y="851" width="1" height="13" fill="#ffffff"/>
<rect x="407" y="856" width="1" height="3" fill="#000"/>
<rect x="408" y="857" width="1" height="3" fill="#000"/>
<rect x="409" y="858" width="1" height="3" fill="#000"/>
<rect x="410" y="857" width="1" height="3" fill="#000"/>
<rect x="411" y="856" width="1" height="3" fill="#000"/>
<rect x="412" y="855" width="1" height="3" fill="#000"/>
<rect x="413" y="854" width="1" height="3" fill="#000"/>
<rect x="854" y="64" width="256" height="1" fill="#a0a0a0"/>
<rect x="854" y="64" width="1" height="795" fill="#a0a0a0"/>
<rect x="854" y="859" width="257" height="1" fill="#ffffff"/>
<rect x="1110" y="64" width="1" height="796" fill="#ffffff"/>
<rect x="855" y="65" width="254" height="1" fill="#696969"/>
<rect x="855" y="65" width="1" height="793" fill="#696969"/>
<rect x="855" y="858" width="255" height="1" fill="#e3e3e3"/>
<rect x="1109" y="65" width="1" height="794" fill="#e3e3e3"/>
<rect x="856" y="66" width="253" height="792" fill="#ffffff"/>
<rect x="856" y="66" width="40" height="21" fill="#f0f0f0"/>
<rect x="856" y="66" width="39" height="1" fill="#ffffff"/>
<rect x="856" y="66" width="1" height="20" fill="#ffffff"/>
<rect x="856" y="86" width="40" height="1" fill="#696969"/>
<rect x="895" y="66" width="1" height="21" fill="#696969"/>
<rect x="857" y="67" width="37" height="1" fill="#e3e3e3"/>
<rect x="857" y="67" width="1" height="18" fill="#e3e3e3"/>
<rect x="857" y="85" width="38" height="1" fill="#a0a0a0"/>
<rect x="894" y="67" width="1" height="19" fill="#a0a0a0"/>
<rect x="896" y="66" width="80" height="21" fill="#f0f0f0"/>
<rect x="896" y="66" width="79" height="1" fill="#ffffff"/>
<rect x="896" y="66" width="1" height="20" fill="#ffffff"/>
<rect x="896" y="86" width="80" height="1" fill="#696969"/>
<rect x="975" y="66" width="1" height="21" fill="#696969"/>
<rect x="897" y="67" width="77" height="1" fill="#e3e3e3"/>
<rect x="897" y="67" width="1" height="18" fill="#e3e3e3"/>
<rect x="897" y="85" width="78" height="1" fill="#a0a0a0"/>
<rect x="974" y="67" width="1" height="19" fill="#a0a0a0"/>
<rect x="976" y="66" width="116" height="21" fill="#f0f0f0"/>
<rect x="976" y="66" width="116" height="1" fill="#ffffff"/>
<rect x="976" y="66" width="1" height="20" fill="#ffffff"/>
<rect x="977" y="85" width="115" height="1" fill="#a0a0a0"/>
<rect x="976" y="86" width="116" height="1" fill="#696969"/>
<path d="M856 88h236v1h-236zM856 106h236v1h-236zM856 124h236v1h-236zM856 142h236v1h-236zM856 160h236v1h-236zM856 178h236v1h-236zM856 196h236v1h-236zM856 214h236v1h-236zM856 232h236v1h-236zM856 250h236v1h-236zM856 268h236v1h-236zM856 286h236v1h-236zM856 304h236v1h-236zM856 322h236v1h-236zM856 340h236v1h-236zM856 358h236v1h-236zM856 376h236v1h-236zM856 394h236v1h-236zM856 412h236v1h-236zM856 430h236v1h-236zM856 448h236v1h-236zM856 466h236v1h-236zM856 484h236v1h-236zM856 502h236v1h-236zM856 520h236v1h-236zM856 538h236v1h-236zM856 556h236v1h-236zM856 574h236v1h-236zM856 592h236v1h-236zM856 610h236v1h-236zM856 628h236v1h-236zM856 646h236v1h-236zM856 664h236v1h-236zM856 682h236v1h-236zM856 700h236v1h-236zM856 718h236v1h-236zM856 736h236v1h-236zM856 754h236v1h-236zM856 772h236v1h-236zM856 790h236v1h-236zM856 808h236v1h-236zM856 826h236v1h-236zM856 844h236v1h-236zM896 87h1v771h-1zM976 87h1v771h-1z" fill="#f0f0f0"/>
<text transform="translate(12.00 863.00) scale(0.7486 1)" font-size="13.44" fill="#000">PCB</text>
<text transform="translate(69.20 863.00) scale(0.9079 1)" font-size="13.44" fill="#000">34.50</text>
<text transform="translate(113.40 863.00) scale(0.7087 1)" font-size="13.44" fill="#000">CCD</text>
<text transform="translate(171.00 863.00) scale(0.9151 1)" font-size="13.44" fill="#000">15.74</text>
<text transform="translate(215.60 863.00) scale(0.7025 1)" font-size="13.44" fill="#000">CCD</text>
<text transform="translate(273.00 863.00) scale(0.9412 1)" font-size="13.44" fill="#000">45.1%</text>
<text transform="translate(422.60 863.20) scale(0.7815 1)" font-size="13.49" fill="#000">Grid</text>
<text transform="translate(872.00 51.10) scale(0.9050 1)" font-size="12.90" fill="#000">Zernike</text>
<text transform="translate(862.80 82.00) scale(0.9524 1)" font-size="14.29" fill="#000">No.</text>
<text transform="translate(902.60 82.00) scale(0.9679 1)" font-size="13.12" fill="#000">Value</text>
<svg x="856" y="87" width="236" height="771" overflow="hidden">
<text transform="translate(4.00 16.20) scale(1.0306 1)" font-size="13.72" fill="#000">1</text>
<text transform="translate(46.00 16.20) scale(1.0306 1)" font-size="13.72" fill="#000">0.2870</text>
<text transform="translate(4.00 34.20) scale(1.0306 1)" font-size="13.72" fill="#000">2</text>
<text transform="translate(46.00 34.20) scale(1.0306 1)" font-size="13.72" fill="#000">-0.2810</text>
<text transform="translate(4.00 52.20) scale(1.0306 1)" font-size="13.72" fill="#000">3</text>
<text transform="translate(46.00 52.20) scale(1.0306 1)" font-size="13.72" fill="#000">0.0011</text>
<text transform="translate(4.00 70.20) scale(1.0306 1)" font-size="13.72" fill="#000">4</text>
<text transform="translate(46.00 70.20) scale(1.0306 1)" font-size="13.72" fill="#000">-0.0039</text>
<text transform="translate(4.00 88.20) scale(1.0306 1)" font-size="13.72" fill="#000">5</text>
<text transform="translate(46.00 88.20) scale(1.0306 1)" font-size="13.72" fill="#000">0.0052</text>
<text transform="translate(4.00 106.20) scale(1.0306 1)" font-size="13.72" fill="#000">6</text>
<text transform="translate(46.00 106.20) scale(1.0306 1)" font-size="13.72" fill="#000">0.0006</text>
<text transform="translate(4.00 124.20) scale(1.0306 1)" font-size="13.72" fill="#000">7</text>
<text transform="translate(46.00 124.20) scale(1.0306 1)" font-size="13.72" fill="#000">0.0001</text>
<text transform="translate(4.00 142.20) scale(1.0306 1)" font-size="13.72" fill="#000">8</text>
<text transform="translate(46.00 142.20) scale(1.0306 1)" font-size="13.72" fill="#000">-0.0027</text>
<text transform="translate(4.00 160.20) scale(1.0306 1)" font-size="13.72" fill="#000">9</text>
<text transform="translate(46.00 160.20) scale(1.0306 1)" font-size="13.72" fill="#000">-0.0020</text>
<text transform="translate(4.00 178.20) scale(1.0306 1)" font-size="13.72" fill="#000">10</text>
<text transform="translate(46.00 178.20) scale(1.0306 1)" font-size="13.72" fill="#000">-0.0001</text>
<text transform="translate(4.00 196.20) scale(1.0306 1)" font-size="13.72" fill="#000">11</text>
<text transform="translate(46.00 196.20) scale(1.0306 1)" font-size="13.72" fill="#000">-0.0005</text>
<text transform="translate(4.00 214.20) scale(1.0306 1)" font-size="13.72" fill="#000">12</text>
<text transform="translate(46.00 214.20) scale(1.0306 1)" font-size="13.72" fill="#000">-0.0004</text>
<text transform="translate(4.00 232.20) scale(1.0306 1)" font-size="13.72" fill="#000">13</text>
<text transform="translate(46.00 232.20) scale(1.0306 1)" font-size="13.72" fill="#000">-0.0008</text>
<text transform="translate(4.00 250.20) scale(1.0306 1)" font-size="13.72" fill="#000">14</text>
<text transform="translate(46.00 250.20) scale(1.0306 1)" font-size="13.72" fill="#000">0.0007</text>
<text transform="translate(4.00 268.20) scale(1.0306 1)" font-size="13.72" fill="#000">15</text>
<text transform="translate(46.00 268.20) scale(1.0306 1)" font-size="13.72" fill="#000">-0.0004</text>
<text transform="translate(4.00 286.20) scale(1.0306 1)" font-size="13.72" fill="#000">16</text>
<text transform="translate(46.00 286.20) scale(1.0306 1)" font-size="13.72" fill="#000">0.0007</text>
<text transform="translate(4.00 304.20) scale(1.0306 1)" font-size="13.72" fill="#000">17</text>
<text transform="translate(46.00 304.20) scale(1.0306 1)" font-size="13.72" fill="#000">-0.0000</text>
<text transform="translate(4.00 322.20) scale(1.0306 1)" font-size="13.72" fill="#000">18</text>
<text transform="translate(46.00 322.20) scale(1.0306 1)" font-size="13.72" fill="#000">0.0006</text>
<text transform="translate(4.00 340.20) scale(1.0306 1)" font-size="13.72" fill="#000">19</text>
<text transform="translate(46.00 340.20) scale(1.0306 1)" font-size="13.72" fill="#000">0.0005</text>
<text transform="translate(4.00 358.20) scale(1.0306 1)" font-size="13.72" fill="#000">20</text>
<text transform="translate(46.00 358.20) scale(1.0306 1)" font-size="13.72" fill="#000">0.0004</text>
<text transform="translate(4.00 376.20) scale(1.0306 1)" font-size="13.72" fill="#000">21</text>
<text transform="translate(46.00 376.20) scale(1.0306 1)" font-size="13.72" fill="#000">-0.0000</text>
<text transform="translate(4.00 394.20) scale(1.0306 1)" font-size="13.72" fill="#000">22</text>
<text transform="translate(46.00 394.20) scale(1.0306 1)" font-size="13.72" fill="#000">0.0000</text>
<text transform="translate(4.00 412.20) scale(1.0306 1)" font-size="13.72" fill="#000">23</text>
<text transform="translate(46.00 412.20) scale(1.0306 1)" font-size="13.72" fill="#000">0.0003</text>
<text transform="translate(4.00 430.20) scale(1.0306 1)" font-size="13.72" fill="#000">24</text>
<text transform="translate(46.00 430.20) scale(1.0306 1)" font-size="13.72" fill="#000">-0.0001</text>
<text transform="translate(4.00 448.20) scale(1.0306 1)" font-size="13.72" fill="#000">25</text>
<text transform="translate(46.00 448.20) scale(1.0306 1)" font-size="13.72" fill="#000">-0.0002</text>
<text transform="translate(4.00 466.20) scale(1.0306 1)" font-size="13.72" fill="#000">26</text>
<text transform="translate(46.00 466.20) scale(1.0306 1)" font-size="13.72" fill="#000">0.0003</text>
<text transform="translate(4.00 484.20) scale(1.0306 1)" font-size="13.72" fill="#000">27</text>
<text transform="translate(46.00 484.20) scale(1.0306 1)" font-size="13.72" fill="#000">0.0005</text>
<text transform="translate(4.00 502.20) scale(1.0306 1)" font-size="13.72" fill="#000">28</text>
<text transform="translate(46.00 502.20) scale(1.0306 1)" font-size="13.72" fill="#000">-0.0005</text>
<text transform="translate(4.00 520.20) scale(1.0306 1)" font-size="13.72" fill="#000">29</text>
<text transform="translate(46.00 520.20) scale(1.0306 1)" font-size="13.72" fill="#000">0.0004</text>
<text transform="translate(4.00 538.20) scale(1.0306 1)" font-size="13.72" fill="#000">30</text>
<text transform="translate(46.00 538.20) scale(1.0306 1)" font-size="13.72" fill="#000">0.0001</text>
<text transform="translate(4.00 556.20) scale(1.0306 1)" font-size="13.72" fill="#000">31</text>
<text transform="translate(46.00 556.20) scale(1.0306 1)" font-size="13.72" fill="#000">0.0002</text>
<text transform="translate(4.00 574.20) scale(1.0306 1)" font-size="13.72" fill="#000">32</text>
<text transform="translate(46.00 574.20) scale(1.0306 1)" font-size="13.72" fill="#000">-0.0001</text>
<text transform="translate(4.00 592.20) scale(1.0306 1)" font-size="13.72" fill="#000">33</text>
<text transform="translate(46.00 592.20) scale(1.0306 1)" font-size="13.72" fill="#000">0.0001</text>
<text transform="translate(4.00 610.20) scale(1.0306 1)" font-size="13.72" fill="#000">34</text>
<text transform="translate(46.00 610.20) scale(1.0306 1)" font-size="13.72" fill="#000">0.0000</text>
<text transform="translate(4.00 628.20) scale(1.0306 1)" font-size="13.72" fill="#000">35</text>
<text transform="translate(46.00 628.20) scale(1.0306 1)" font-size="13.72" fill="#000">0.0001</text>
<text transform="translate(4.00 646.20) scale(1.0306 1)" font-size="13.72" fill="#000">36</text>
<text transform="translate(46.00 646.20) scale(1.0306 1)" font-size="13.72" fill="#000">0.0000</text>
<text transform="translate(4.00 664.20) scale(1.0306 1)" font-size="13.72" fill="#000">37</text>
<text transform="translate(46.00 664.20) scale(1.0306 1)" font-size="13.72" fill="#000">-0.0003</text>
<text transform="translate(4.00 682.20) scale(1.0306 1)" font-size="13.72" fill="#000">38</text>
<text transform="translate(46.00 682.20) scale(1.0306 1)" font-size="13.72" fill="#000">0.0001</text>
<text transform="translate(4.00 700.20) scale(1.0306 1)" font-size="13.72" fill="#000">39</text>
<text transform="translate(46.00 700.20) scale(1.0306 1)" font-size="13.72" fill="#000">0.0001</text>
<text transform="translate(4.00 718.20) scale(1.0306 1)" font-size="13.72" fill="#000">40</text>
<text transform="translate(46.00 718.20) scale(1.0306 1)" font-size="13.72" fill="#000">0.0001</text>
<text transform="translate(4.00 736.20) scale(1.0306 1)" font-size="13.72" fill="#000">41</text>
<text transform="translate(46.00 736.20) scale(1.0306 1)" font-size="13.72" fill="#000">-0.0001</text>
<text transform="translate(4.00 754.20) scale(1.0306 1)" font-size="13.72" fill="#000">42</text>
<text transform="translate(46.00 754.20) scale(1.0306 1)" font-size="13.72" fill="#000">0.0001</text>
<text transform="translate(4.00 772.20) scale(1.0306 1)" font-size="13.72" fill="#000">43</text>
<text transform="translate(46.00 772.20) scale(1.0306 1)" font-size="13.72" fill="#000">0.0002</text>
</svg>
<rect x="1093" y="66" width="16" height="792" fill="#f0f0f0"/>
<rect x="1093" y="83" width="15" height="490" fill="#cdcdcd"/>
<path d="M1096.8 78.2L1100.5 74.5L1104.2 78.2L1104.2 75.6L1100.5 71.9L1096.8 75.6z" fill="#606060" shape-rendering="geometricPrecision"/>
<path d="M1096.8 846.8L1100.5 850.5L1104.2 846.8L1104.2 849.4L1100.5 853.1L1096.8 849.4z" fill="#606060" shape-rendering="geometricPrecision"/>
<rect x="1127" y="34" width="288" height="1" fill="#a0a0a0"/>
<rect x="1127" y="34" width="1" height="472" fill="#a0a0a0"/>
<rect x="1127" y="506" width="289" height="1" fill="#ffffff"/>
<rect x="1415" y="34" width="1" height="473" fill="#ffffff"/>
<rect x="1128" y="35" width="286" height="1" fill="#ffffff"/>
<rect x="1128" y="35" width="1" height="470" fill="#ffffff"/>
<rect x="1128" y="505" width="287" height="1" fill="#a0a0a0"/>
<rect x="1414" y="35" width="1" height="471" fill="#a0a0a0"/>
<rect x="1134" y="28" width="98" height="14" fill="#f0f0f0"/>
<g clip-path="url(#ell)">
<polygon points="1029.0,226.3 1314.0,-54.4 1317.7,-50.7 1032.7,230.0" fill="url(#j0)" shape-rendering="geometricPrecision"/>
<polygon points="1031.8,229.2 1316.8,-51.5 1320.5,-47.8 1035.5,232.9" fill="url(#j1)" shape-rendering="geometricPrecision"/>
<polygon points="1034.6,232.0 1319.6,-48.7 1323.3,-45.0 1038.3,235.7" fill="url(#j2)" shape-rendering="geometricPrecision"/>
<polygon points="1037.4,234.9 1322.4,-45.8 1326.1,-42.1 1041.1,238.6" fill="url(#j3)" shape-rendering="geometricPrecision"/>
<polygon points="1040.2,237.7 1325.2,-43.0 1328.9,-39.3 1043.9,241.4" fill="url(#j4)" shape-rendering="geometricPrecision"/>
<polygon points="1043.1,240.6 1328.1,-40.1 1331.7,-36.4 1046.7,244.3" fill="url(#j5)" shape-rendering="geometricPrecision"/>
<polygon points="1045.9,243.4 1330.9,-37.3 1334.5,-33.6 1049.5,247.1" fill="url(#j6)" shape-rendering="geometricPrecision"/>
<polygon points="1048.7,246.3 1333.7,-34.4 1337.3,-30.7 1052.3,250.0" fill="url(#j7)" shape-rendering="geometricPrecision"/>
<polygon points="1051.5,249.1 1336.5,-31.6 1340.1,-27.9 1055.1,252.8" fill="url(#j8)" shape-rendering="geometricPrecision"/>
<polygon points="1054.3,252.0 1339.3,-28.7 1342.9,-25.0 1057.9,255.7" fill="url(#j9)" shape-rendering="geometricPrecision"/>
<polygon points="1057.1,254.8 1342.1,-25.9 1345.7,-22.2 1060.7,258.5" fill="url(#j10)" shape-rendering="geometricPrecision"/>
<polygon points="1059.9,257.7 1344.9,-23.0 1348.5,-19.3 1063.5,261.4" fill="url(#j11)" shape-rendering="geometricPrecision"/>
<polygon points="1062.7,260.5 1347.7,-20.2 1351.4,-16.5 1066.4,264.2" fill="url(#j12)" shape-rendering="geometricPrecision"/>
<polygon points="1065.5,263.4 1350.5,-17.3 1354.2,-13.6 1069.2,267.1" fill="url(#j13)" shape-rendering="geometricPrecision"/>
<polygon points="1068.3,266.2 1353.3,-14.5 1357.0,-10.8 1072.0,269.9" fill="url(#j14)" shape-rendering="geometricPrecision"/>
<polygon points="1071.1,269.1 1356.1,-11.6 1359.8,-7.9 1074.8,272.8" fill="url(#j15)" shape-rendering="geometricPrecision"/>
<polygon points="1073.9,271.9 1358.9,-8.8 1362.6,-5.1 1077.6,275.6" fill="url(#j16)" shape-rendering="geometricPrecision"/>
<polygon points="1076.7,274.8 1361.7,-5.9 1365.4,-2.2 1080.4,278.5" fill="url(#j17)" shape-rendering="geometricPrecision"/>
<polygon points="1079.5,277.6 1364.5,-3.1 1368.2,0.6 1083.2,281.3" fill="url(#j18)" shape-rendering="geometricPrecision"/>
<polygon points="1082.4,280.5 1367.4,-0.2 1371.0,3.5 1086.0,284.2" fill="url(#j19)" shape-rendering="geometricPrecision"/>
<polygon points="1085.2,283.3 1370.2,2.6 1373.8,6.3 1088.8,287.0" fill="url(#j20)" shape-rendering="geometricPrecision"/>
<polygon points="1088.0,286.2 1373.0,5.5 1376.6,9.2 1091.6,289.9" fill="url(#j21)" shape-rendering="geometricPrecision"/>
<polygon points="1090.8,289.0 1375.8,8.3 1379.4,12.0 1094.4,292.7" fill="url(#j22)" shape-rendering="geometricPrecision"/>
<polygon points="1093.6,291.9 1378.6,11.2 1382.2,14.9 1097.2,295.6" fill="url(#j23)" shape-rendering="geometricPrecision"/>
<polygon points="1096.4,294.7 1381.4,14.0 1385.0,17.7 1100.0,298.4" fill="url(#j24)" shape-rendering="geometricPrecision"/>
<polygon points="1099.2,297.6 1384.2,16.9 1387.8,20.6 1102.8,301.3" fill="url(#j25)" shape-rendering="geometricPrecision"/>
<polygon points="1102.0,300.4 1387.0,19.7 1390.7,23.4 1105.7,304.1" fill="url(#j26)" shape-rendering="geometricPrecision"/>
<polygon points="1104.8,303.3 1389.8,22.6 1393.5,26.3 1108.5,307.0" fill="url(#j27)" shape-rendering="geometricPrecision"/>
<polygon points="1107.6,306.1 1392.6,25.4 1396.3,29.1 1111.3,309.8" fill="url(#j28)" shape-rendering="geometricPrecision"/>
<polygon points="1110.4,309.0 1395.4,28.3 1399.1,32.0 1114.1,312.7" fill="url(#j29)" shape-rendering="geometricPrecision"/>
<polygon points="1113.2,311.8 1398.2,31.1 1401.9,34.8 1116.9,315.5" fill="url(#j30)" shape-rendering="geometricPrecision"/>
<polygon points="1116.0,314.7 1401.0,34.0 1404.7,37.7 1119.7,318.4" fill="url(#j31)" shape-rendering="geometricPrecision"/>
<polygon points="1118.9,317.5 1403.9,36.8 1407.5,40.5 1122.5,321.2" fill="url(#j32)" shape-rendering="geometricPrecision"/>
<polygon points="1121.7,320.4 1406.7,39.7 1410.3,43.4 1125.3,324.1" fill="url(#j33)" shape-rendering="geometricPrecision"/>
<polygon points="1124.5,323.2 1409.5,42.5 1413.1,46.2 1128.1,326.9" fill="url(#j34)" shape-rendering="geometricPrecision"/>
<polygon points="1127.3,326.1 1412.3,45.4 1415.9,49.1 1130.9,329.8" fill="url(#j35)" shape-rendering="geometricPrecision"/>
<polygon points="1130.1,328.9 1415.1,48.2 1418.7,51.9 1133.7,332.6" fill="url(#j36)" shape-rendering="geometricPrecision"/>
<polygon points="1132.9,331.8 1417.9,51.1 1421.5,54.8 1136.5,335.5" fill="url(#j37)" shape-rendering="geometricPrecision"/>
<polygon points="1135.7,334.6 1420.7,53.9 1424.3,57.6 1139.3,338.3" fill="url(#j38)" shape-rendering="geometricPrecision"/>
<polygon points="1138.5,337.5 1423.5,56.8 1427.1,60.5 1142.1,341.2" fill="url(#j39)" shape-rendering="geometricPrecision"/>
<polygon points="1141.3,340.3 1426.3,59.6 1430.0,63.3 1145.0,344.0" fill="url(#j40)" shape-rendering="geometricPrecision"/>
<polygon points="1144.1,343.2 1429.1,62.5 1432.8,66.2 1147.8,346.9" fill="url(#j41)" shape-rendering="geometricPrecision"/>
<polygon points="1146.9,346.0 1431.9,65.3 1435.6,69.0 1150.6,349.7" fill="url(#j42)" shape-rendering="geometricPrecision"/>
<polygon points="1149.7,348.9 1434.7,68.2 1438.4,71.9 1153.4,352.6" fill="url(#j43)" shape-rendering="geometricPrecision"/>
<polygon points="1152.5,351.7 1437.5,71.0 1441.2,74.7 1156.2,355.4" fill="url(#j44)" shape-rendering="geometricPrecision"/>
<polygon points="1155.3,354.6 1440.3,73.9 1444.0,77.6 1159.0,358.3" fill="url(#j45)" shape-rendering="geometricPrecision"/>
<polygon points="1158.2,357.4 1443.2,76.7 1446.8,80.4 1161.8,361.1" fill="url(#j46)" shape-rendering="geometricPrecision"/>
<polygon points="1161.0,360.3 1446.0,79.6 1449.6,83.3 1164.6,364.0" fill="url(#j47)" shape-rendering="geometricPrecision"/>
<polygon points="1163.8,363.1 1448.8,82.4 1452.4,86.1 1167.4,366.8" fill="url(#j48)" shape-rendering="geometricPrecision"/>
<polygon points="1166.6,366.0 1451.6,85.3 1455.2,89.0 1170.2,369.7" fill="url(#j49)" shape-rendering="geometricPrecision"/>
<polygon points="1169.4,368.8 1454.4,88.1 1458.0,91.8 1173.0,372.5" fill="url(#j50)" shape-rendering="geometricPrecision"/>
<polygon points="1172.2,371.7 1457.2,91.0 1460.8,94.7 1175.8,375.4" fill="url(#j51)" shape-rendering="geometricPrecision"/>
<polygon points="1175.0,374.5 1460.0,93.8 1463.6,97.5 1178.6,378.2" fill="url(#j52)" shape-rendering="geometricPrecision"/>
<polygon points="1177.8,377.4 1462.8,96.7 1466.5,100.4 1181.5,381.1" fill="url(#j53)" shape-rendering="geometricPrecision"/>
<polygon points="1180.6,380.2 1465.6,99.5 1469.3,103.2 1184.3,383.9" fill="url(#j54)" shape-rendering="geometricPrecision"/>
<polygon points="1183.4,383.1 1468.4,102.4 1472.1,106.1 1187.1,386.8" fill="url(#j55)" shape-rendering="geometricPrecision"/>
<polygon points="1186.2,385.9 1471.2,105.2 1474.9,108.9 1189.9,389.6" fill="url(#j56)" shape-rendering="geometricPrecision"/>
<polygon points="1189.0,388.8 1474.0,108.1 1477.7,111.8 1192.7,392.5" fill="url(#j57)" shape-rendering="geometricPrecision"/>
<polygon points="1191.8,391.6 1476.8,110.9 1480.5,114.6 1195.5,395.3" fill="url(#j58)" shape-rendering="geometricPrecision"/>
<polygon points="1194.6,394.5 1479.6,113.8 1483.3,117.5 1198.3,398.2" fill="url(#j59)" shape-rendering="geometricPrecision"/>
<polygon points="1197.5,397.3 1482.5,116.6 1486.1,120.3 1201.1,401.0" fill="url(#j60)" shape-rendering="geometricPrecision"/>
<polygon points="1200.3,400.2 1485.3,119.5 1488.9,123.2 1203.9,403.9" fill="url(#j61)" shape-rendering="geometricPrecision"/>
<polygon points="1203.1,403.0 1488.1,122.3 1491.7,126.0 1206.7,406.7" fill="url(#j62)" shape-rendering="geometricPrecision"/>
<polygon points="1205.9,405.9 1490.9,125.2 1494.5,128.9 1209.5,409.6" fill="url(#j63)" shape-rendering="geometricPrecision"/>
<polygon points="1208.7,408.7 1493.7,128.0 1497.3,131.7 1212.3,412.4" fill="url(#j64)" shape-rendering="geometricPrecision"/>
<polygon points="1211.5,411.6 1496.5,130.9 1500.1,134.6 1215.1,415.3" fill="url(#j65)" shape-rendering="geometricPrecision"/>
<polygon points="1214.3,414.4 1499.3,133.7 1502.9,137.4 1217.9,418.1" fill="url(#j66)" shape-rendering="geometricPrecision"/>
<polygon points="1217.1,417.3 1502.1,136.6 1505.8,140.3 1220.8,421.0" fill="url(#j67)" shape-rendering="geometricPrecision"/>
<polygon points="1219.9,420.1 1504.9,139.4 1508.6,143.1 1223.6,423.8" fill="url(#j68)" shape-rendering="geometricPrecision"/>
<polygon points="1222.7,423.0 1507.7,142.3 1511.4,146.0 1226.4,426.7" fill="url(#j69)" shape-rendering="geometricPrecision"/>
<polygon points="1225.5,425.8 1510.5,145.1 1514.2,148.8 1229.2,429.5" fill="url(#j70)" shape-rendering="geometricPrecision"/>
<polygon points="1228.3,428.7 1513.3,148.0 1517.0,151.7 1232.0,432.4" fill="url(#j71)" shape-rendering="geometricPrecision"/>
</g>
<path d="M1145 57h256v264h-256zM1146 189a127 131 0 1 0 254 0a127 131 0 1 0 -254 0z" fill="#80ff80" fill-rule="evenodd"/>
<rect x="1157" y="475" width="13" height="13" fill="#ffffff"/>
<rect x="1157" y="475" width="12" height="1" fill="#a0a0a0"/>
<rect x="1157" y="475" width="1" height="12" fill="#a0a0a0"/>
<rect x="1158" y="476" width="10" height="1" fill="#696969"/>
<rect x="1158" y="476" width="1" height="10" fill="#696969"/>
<rect x="1158" y="486" width="11" height="1" fill="#e3e3e3"/>
<rect x="1168" y="476" width="1" height="11" fill="#e3e3e3"/>
<rect x="1157" y="487" width="13" height="1" fill="#ffffff"/>
<rect x="1169" y="475" width="1" height="13" fill="#ffffff"/>
<rect x="1248" y="475" width="13" height="13" fill="#ffffff"/>
<rect x="1248" y="475" width="12" height="1" fill="#a0a0a0"/>
<rect x="1248" y="475" width="1" height="12" fill="#a0a0a0"/>
<rect x="1249" y="476" width="10" height="1" fill="#696969"/>
<rect x="1249" y="476" width="1" height="10" fill="#696969"/>
<rect x="1249" y="486" width="11" height="1" fill="#e3e3e3"/>
<rect x="1259" y="476" width="1" height="11" fill="#e3e3e3"/>
<rect x="1248" y="487" width="13" height="1" fill="#ffffff"/>
<rect x="1260" y="475" width="1" height="13" fill="#ffffff"/>
<rect x="1251" y="480" width="1" height="3" fill="#000"/>
<rect x="1252" y="481" width="1" height="3" fill="#000"/>
<rect x="1253" y="482" width="1" height="3" fill="#000"/>
<rect x="1254" y="481" width="1" height="3" fill="#000"/>
<rect x="1255" y="480" width="1" height="3" fill="#000"/>
<rect x="1256" y="479" width="1" height="3" fill="#000"/>
<rect x="1257" y="478" width="1" height="3" fill="#000"/>
<rect x="1325" y="474" width="13" height="13" fill="#ffffff"/>
<rect x="1325" y="474" width="12" height="1" fill="#a0a0a0"/>
<rect x="1325" y="474" width="1" height="12" fill="#a0a0a0"/>
<rect x="1326" y="475" width="10" height="1" fill="#696969"/>
<rect x="1326" y="475" width="1" height="10" fill="#696969"/>
<rect x="1326" y="485" width="11" height="1" fill="#e3e3e3"/>
<rect x="1336" y="475" width="1" height="11" fill="#e3e3e3"/>
<rect x="1325" y="486" width="13" height="1" fill="#ffffff"/>
<rect x="1337" y="474" width="1" height="13" fill="#ffffff"/>
<rect x="1328" y="479" width="1" height="3" fill="#000"/>
<rect x="1329" y="480" width="1" height="3" fill="#000"/>
<rect x="1330" y="481" width="1" height="3" fill="#000"/>
<rect x="1331" y="480" width="1" height="3" fill="#000"/>
<rect x="1332" y="479" width="1" height="3" fill="#000"/>
<rect x="1333" y="478" width="1" height="3" fill="#000"/>
<rect x="1334" y="477" width="1" height="3" fill="#000"/>
<rect x="1185" y="528" width="13" height="13" fill="#ffffff"/>
<rect x="1185" y="528" width="12" height="1" fill="#a0a0a0"/>
<rect x="1185" y="528" width="1" height="12" fill="#a0a0a0"/>
<rect x="1186" y="529" width="10" height="1" fill="#696969"/>
<rect x="1186" y="529" width="1" height="10" fill="#696969"/>
<rect x="1186" y="539" width="11" height="1" fill="#e3e3e3"/>
<rect x="1196" y="529" width="1" height="11" fill="#e3e3e3"/>
<rect x="1185" y="540" width="13" height="1" fill="#ffffff"/>
<rect x="1197" y="528" width="1" height="13" fill="#ffffff"/>
<rect x="1188" y="533" width="1" height="3" fill="#000"/>
<rect x="1189" y="534" width="1" height="3" fill="#000"/>
<rect x="1190" y="535" width="1" height="3" fill="#000"/>
<rect x="1191" y="534" width="1" height="3" fill="#000"/>
<rect x="1192" y="533" width="1" height="3" fill="#000"/>
<rect x="1193" y="532" width="1" height="3" fill="#000"/>
<rect x="1194" y="531" width="1" height="3" fill="#000"/>
<rect x="1230" y="528" width="13" height="13" fill="#ffffff"/>
<rect x="1230" y="528" width="12" height="1" fill="#a0a0a0"/>
<rect x="1230" y="528" width="1" height="12" fill="#a0a0a0"/>
<rect x="1231" y="529" width="10" height="1" fill="#696969"/>
<rect x="1231" y="529" width="1" height="10" fill="#696969"/>
<rect x="1231" y="539" width="11" height="1" fill="#e3e3e3"/>
<rect x="1241" y="529" width="1" height="11" fill="#e3e3e3"/>
<rect x="1230" y="540" width="13" height="1" fill="#ffffff"/>
<rect x="1242" y="528" width="1" height="13" fill="#ffffff"/>
<rect x="1211" y="591" width="2" height="2" fill="#000"/>
<rect x="1211" y="595" width="2" height="2" fill="#000"/>
<rect x="1237" y="580" width="55" height="1" fill="#a0a0a0"/>
<rect x="1237" y="580" width="1" height="23" fill="#a0a0a0"/>
<rect x="1237" y="603" width="56" height="1" fill="#ffffff"/>
<rect x="1292" y="580" width="1" height="24" fill="#ffffff"/>
<rect x="1238" y="581" width="53" height="1" fill="#696969"/>
<rect x="1238" y="581" width="1" height="21" fill="#696969"/>
<rect x="1238" y="602" width="54" height="1" fill="#e3e3e3"/>
<rect x="1291" y="581" width="1" height="22" fill="#e3e3e3"/>
<rect x="1239" y="582" width="52" height="20" fill="#ffffff"/>
<rect x="1148" y="631" width="243" height="1" fill="#a0a0a0"/>
<rect x="1148" y="632" width="243" height="1" fill="#696969"/>
<rect x="1148" y="633" width="244" height="1" fill="#ffffff"/>
<rect x="1391" y="631" width="1" height="3" fill="#ffffff"/>
<rect x="1144" y="622" width="11" height="22" fill="#f0f0f0"/>
<rect x="1144" y="622" width="10" height="1" fill="#ffffff"/>
<rect x="1144" y="622" width="1" height="21" fill="#ffffff"/>
<rect x="1144" y="643" width="11" height="1" fill="#696969"/>
<rect x="1154" y="622" width="1" height="22" fill="#696969"/>
<rect x="1145" y="623" width="8" height="1" fill="#e3e3e3"/>
<rect x="1145" y="623" width="1" height="19" fill="#e3e3e3"/>
<rect x="1145" y="642" width="9" height="1" fill="#a0a0a0"/>
<rect x="1153" y="623" width="1" height="20" fill="#a0a0a0"/>
<rect x="1148" y="656" width="243" height="1" fill="#a0a0a0"/>
<rect x="1148" y="657" width="243" height="1" fill="#696969"/>
<rect x="1148" y="658" width="244" height="1" fill="#ffffff"/>
<rect x="1391" y="656" width="1" height="3" fill="#ffffff"/>
<rect x="1145" y="647" width="11" height="22" fill="#f0f0f0"/>
<rect x="1145" y="647" width="10" height="1" fill="#ffffff"/>
<rect x="1145" y="647" width="1" height="21" fill="#ffffff"/>
<rect x="1145" y="668" width="11" height="1" fill="#696969"/>
<rect x="1155" y="647" width="1" height="22" fill="#696969"/>
<rect x="1146" y="648" width="8" height="1" fill="#e3e3e3"/>
<rect x="1146" y="648" width="1" height="19" fill="#e3e3e3"/>
<rect x="1146" y="667" width="9" height="1" fill="#a0a0a0"/>
<rect x="1154" y="648" width="1" height="20" fill="#a0a0a0"/>
<rect x="1144" y="656" width="1" height="3" fill="#b0b0b0"/>
<rect x="1137" y="731" width="261" height="1" fill="#a0a0a0"/>
<rect x="1137" y="731" width="1" height="24" fill="#a0a0a0"/>
<rect x="1137" y="755" width="262" height="1" fill="#ffffff"/>
<rect x="1398" y="731" width="1" height="25" fill="#ffffff"/>
<rect x="1138" y="732" width="259" height="1" fill="#696969"/>
<rect x="1138" y="732" width="1" height="22" fill="#696969"/>
<rect x="1138" y="754" width="260" height="1" fill="#e3e3e3"/>
<rect x="1397" y="732" width="1" height="23" fill="#e3e3e3"/>
<rect x="1139" y="733" width="258" height="21" fill="#ffffff"/>
<rect x="1268.5" y="738.5" width="2" height="6" fill="none" stroke="#8a8ac4" stroke-width="1"/>
<rect x="1268" y="738" width="3" height="1" fill="#505070"/>
<rect x="1271.5" y="738.5" width="2" height="6" fill="none" stroke="#8a8ac4" stroke-width="1"/>
<rect x="1271" y="738" width="3" height="1" fill="#505070"/>
<rect x="1274.5" y="738.5" width="2" height="6" fill="none" stroke="#8a8ac4" stroke-width="1"/>
<rect x="1274" y="738" width="3" height="1" fill="#505070"/>
<rect x="1277.5" y="738.5" width="2" height="6" fill="none" stroke="#8a8ac4" stroke-width="1"/>
<rect x="1277" y="738" width="3" height="1" fill="#505070"/>
<rect x="1280.5" y="738.5" width="2" height="6" fill="none" stroke="#8a8ac4" stroke-width="1"/>
<rect x="1280" y="738" width="3" height="1" fill="#505070"/>
<rect x="1283.5" y="738.5" width="2" height="6" fill="none" stroke="#8a8ac4" stroke-width="1"/>
<rect x="1283" y="738" width="3" height="1" fill="#505070"/>
<rect x="1138" y="764" width="86" height="25" fill="#f0f0f0"/>
<rect x="1138" y="764" width="85" height="1" fill="#ffffff"/>
<rect x="1138" y="764" width="1" height="24" fill="#ffffff"/>
<rect x="1138" y="788" width="86" height="1" fill="#696969"/>
<rect x="1223" y="764" width="1" height="25" fill="#696969"/>
<rect x="1139" y="765" width="83" height="1" fill="#e3e3e3"/>
<rect x="1139" y="765" width="1" height="22" fill="#e3e3e3"/>
<rect x="1139" y="787" width="84" height="1" fill="#a0a0a0"/>
<rect x="1222" y="765" width="1" height="23" fill="#a0a0a0"/>
<rect x="1136" y="795" width="89" height="25" fill="#f0f0f0"/>
<rect x="1136" y="795" width="88" height="1" fill="#ffffff"/>
<rect x="1136" y="795" width="1" height="24" fill="#ffffff"/>
<rect x="1136" y="819" width="89" height="1" fill="#696969"/>
<rect x="1224" y="795" width="1" height="25" fill="#696969"/>
<rect x="1137" y="796" width="86" height="1" fill="#e3e3e3"/>
<rect x="1137" y="796" width="1" height="22" fill="#e3e3e3"/>
<rect x="1137" y="818" width="87" height="1" fill="#a0a0a0"/>
<rect x="1223" y="796" width="1" height="23" fill="#a0a0a0"/>
<rect x="1136.5" y="827.5" width="87" height="24" fill="none" stroke="#696969" stroke-width="1"/>
<rect x="1137" y="828" width="86" height="23" fill="#f0f0f0"/>
<rect x="1137" y="828" width="85" height="1" fill="#ffffff"/>
<rect x="1137" y="828" width="1" height="22" fill="#ffffff"/>
<rect x="1137" y="850" width="86" height="1" fill="#696969"/>
<rect x="1222" y="828" width="1" height="23" fill="#696969"/>
<rect x="1138" y="829" width="83" height="1" fill="#e3e3e3"/>
<rect x="1138" y="829" width="1" height="20" fill="#e3e3e3"/>
<rect x="1138" y="849" width="84" height="1" fill="#a0a0a0"/>
<rect x="1221" y="829" width="1" height="21" fill="#a0a0a0"/>
<rect x="1265" y="764" width="95" height="25" fill="#f0f0f0"/>
<rect x="1265" y="764" width="94" height="1" fill="#ffffff"/>
<rect x="1265" y="764" width="1" height="24" fill="#ffffff"/>
<rect x="1265" y="788" width="95" height="1" fill="#696969"/>
<rect x="1359" y="764" width="1" height="25" fill="#696969"/>
<rect x="1266" y="765" width="92" height="1" fill="#e3e3e3"/>
<rect x="1266" y="765" width="1" height="22" fill="#e3e3e3"/>
<rect x="1266" y="787" width="93" height="1" fill="#a0a0a0"/>
<rect x="1358" y="765" width="1" height="23" fill="#a0a0a0"/>
<rect x="1264" y="794" width="96" height="25" fill="#f0f0f0"/>
<rect x="1264" y="794" width="95" height="1" fill="#ffffff"/>
<rect x="1264" y="794" width="1" height="24" fill="#ffffff"/>
<rect x="1264" y="818" width="96" height="1" fill="#696969"/>
<rect x="1359" y="794" width="1" height="25" fill="#696969"/>
<rect x="1265" y="795" width="93" height="1" fill="#e3e3e3"/>
<rect x="1265" y="795" width="1" height="22" fill="#e3e3e3"/>
<rect x="1265" y="817" width="94" height="1" fill="#a0a0a0"/>
<rect x="1358" y="795" width="1" height="23" fill="#a0a0a0"/>
<rect x="1262" y="829" width="98" height="25" fill="#f0f0f0"/>
<rect x="1262" y="829" width="97" height="1" fill="#ffffff"/>
<rect x="1262" y="829" width="1" height="24" fill="#ffffff"/>
<rect x="1262" y="853" width="98" height="1" fill="#696969"/>
<rect x="1359" y="829" width="1" height="25" fill="#696969"/>
<rect x="1263" y="830" width="95" height="1" fill="#e3e3e3"/>
<rect x="1263" y="830" width="1" height="22" fill="#e3e3e3"/>
<rect x="1263" y="852" width="96" height="1" fill="#a0a0a0"/>
<rect x="1358" y="830" width="1" height="23" fill="#a0a0a0"/>
<text transform="translate(1160.20 38.20) scale(0.9000 1)" font-size="13.20" fill="#000">(</text>
<text transform="translate(1225.40 38.20) scale(0.9000 1)" font-size="13.20" fill="#000">)</text>
<text transform="translate(1162.40 367.00) scale(0.8612 1)" font-size="34.29" fill="#000">PV: 1.61</text>
<text transform="translate(1160.60 426.80) scale(0.8933 1)" font-size="34.90" fill="#000">rms: 0.35</text>
<text transform="translate(1238.00 575.60) scale(0.9775 1)" font-size="12.86" fill="#000">125.0</text>
<text transform="translate(1194.40 596.80) scale(0.8099 1)" font-size="13.22" fill="#000">ms</text>
<text transform="translate(1241.00 594.40) scale(1.0090 1)" font-size="12.06" fill="#000">4.000</text>
<text transform="translate(1136.20 617.00) scale(0.9339 1)" font-size="12.63" fill="#000">10us</text>
<text transform="translate(1347.80 618.40) scale(0.9686 1)" font-size="12.63" fill="#000">1000us</text>
<text transform="translate(1136.20 685.40) scale(0.9026 1)" font-size="13.19" fill="#000">1ms</text>
<text transform="translate(1352.80 685.00) scale(0.9529 1)" font-size="12.63" fill="#000">1000ms</text>
<text transform="translate(1142.60 746.00) scale(0.9377 1)" font-size="12.90" fill="#000">C:\Program Files (x86)\</text>
<path d="M26 33h1v1h-1zM38 33h1v1h-1zM45 33h4v1h-4zM51 33h1v1h-1zM22 34h1v1h-1zM26 34h1v1h-1zM30 34h1v1h-1zM38 34h1v1h-1zM45 34h1v1h-1zM48 34h8v1h-8zM23 35h1v1h-1zM26 35h1v1h-1zM29 35h1v1h-1zM38 35h5v1h-5zM45 35h1v1h-1zM47 35h1v1h-1zM50 35h1v1h-1zM26 36h1v1h-1zM38 36h1v1h-1zM45 36h2v1h-2zM50 36h1v1h-1zM52 36h1v1h-1zM21 37h11v1h-11zM35 37h7v1h-7zM45 37h1v1h-1zM47 37h1v1h-1zM49 37h6v1h-6zM24 38h1v1h-1zM27 38h1v1h-1zM35 38h1v1h-1zM41 38h1v1h-1zM45 38h1v1h-1zM48 38h1v1h-1zM52 38h1v1h-1zM24 39h1v1h-1zM27 39h1v1h-1zM35 39h1v1h-1zM41 39h1v1h-1zM45 39h1v1h-1zM48 39h1v1h-1zM52 39h1v1h-1zM24 40h1v1h-1zM27 40h1v1h-1zM31 40h1v1h-1zM35 40h7v1h-7zM45 40h2v1h-2zM48 40h8v1h-8zM24 41h1v1h-1zM27 41h1v1h-1zM31 41h1v1h-1zM45 41h1v1h-1zM47 41h1v1h-1zM52 41h1v1h-1zM23 42h1v1h-1zM27 42h1v1h-1zM31 42h1v1h-1zM34 42h1v1h-1zM36 42h1v1h-1zM39 42h1v1h-1zM42 42h1v1h-1zM45 42h1v1h-1zM52 42h1v1h-1zM21 43h2v1h-2zM28 43h4v1h-4zM33 43h1v1h-1zM37 43h1v1h-1zM40 43h1v1h-1zM43 43h1v1h-1zM45 43h1v1h-1zM52 43h1v1h-1z" fill="#000"/>
<path d="M34 854h1v1h-1zM38 854h5v1h-5zM50 854h1v1h-1zM35 855h1v1h-1zM38 855h1v1h-1zM42 855h1v1h-1zM46 855h10v1h-10zM38 856h5v1h-5zM46 856h1v1h-1zM49 856h1v1h-1zM52 856h1v1h-1zM33 857h1v1h-1zM36 857h1v1h-1zM38 857h1v1h-1zM42 857h1v1h-1zM46 857h9v1h-9zM34 858h1v1h-1zM36 858h1v1h-1zM38 858h5v1h-5zM46 858h1v1h-1zM49 858h1v1h-1zM52 858h1v1h-1zM35 859h1v1h-1zM46 859h1v1h-1zM49 859h4v1h-4zM35 860h1v1h-1zM37 860h7v1h-7zM46 860h1v1h-1zM33 861h2v1h-2zM37 861h1v1h-1zM39 861h1v1h-1zM41 861h1v1h-1zM43 861h1v1h-1zM46 861h1v1h-1zM48 861h6v1h-6zM34 862h1v1h-1zM37 862h1v1h-1zM39 862h1v1h-1zM41 862h1v1h-1zM43 862h1v1h-1zM46 862h1v1h-1zM49 862h1v1h-1zM52 862h1v1h-1zM34 863h1v1h-1zM37 863h1v1h-1zM39 863h1v1h-1zM41 863h1v1h-1zM43 863h1v1h-1zM45 863h1v1h-1zM50 863h2v1h-2zM34 864h1v1h-1zM36 864h8v1h-8zM45 864h1v1h-1zM47 864h3v1h-3zM52 864h3v1h-3zM59 857h2v2h-2zM59 861h2v2h-2z" fill="#000"/>
<path d="M103 856h2v2h-2zM103 859h2v3h-2zM103 862h1v1h-1z" fill="#000"/>
<path d="M136 854h1v1h-1zM140 854h5v1h-5zM152 854h1v1h-1zM137 855h1v1h-1zM140 855h1v1h-1zM144 855h1v1h-1zM148 855h10v1h-10zM140 856h5v1h-5zM148 856h1v1h-1zM151 856h1v1h-1zM154 856h1v1h-1zM135 857h1v1h-1zM138 857h1v1h-1zM140 857h1v1h-1zM144 857h1v1h-1zM148 857h9v1h-9zM136 858h1v1h-1zM138 858h1v1h-1zM140 858h5v1h-5zM148 858h1v1h-1zM151 858h1v1h-1zM154 858h1v1h-1zM137 859h1v1h-1zM148 859h1v1h-1zM151 859h4v1h-4zM137 860h1v1h-1zM139 860h7v1h-7zM148 860h1v1h-1zM135 861h2v1h-2zM139 861h1v1h-1zM141 861h1v1h-1zM143 861h1v1h-1zM145 861h1v1h-1zM148 861h1v1h-1zM150 861h6v1h-6zM136 862h1v1h-1zM139 862h1v1h-1zM141 862h1v1h-1zM143 862h1v1h-1zM145 862h1v1h-1zM148 862h1v1h-1zM151 862h1v1h-1zM154 862h1v1h-1zM136 863h1v1h-1zM139 863h1v1h-1zM141 863h1v1h-1zM143 863h1v1h-1zM145 863h1v1h-1zM147 863h1v1h-1zM152 863h2v1h-2zM136 864h1v1h-1zM138 864h8v1h-8zM147 864h1v1h-1zM149 864h3v1h-3zM154 864h3v1h-3zM161 857h2v2h-2zM161 861h2v2h-2z" fill="#000"/>
<path d="M205 856h2v2h-2zM205 859h2v3h-2zM205 862h1v1h-1z" fill="#000"/>
<path d="M242 854h1v1h-1zM249 854h3v1h-3zM254 854h5v1h-5zM238 855h1v1h-1zM242 855h1v1h-1zM246 855h1v1h-1zM251 855h1v1h-1zM254 855h1v1h-1zM258 855h1v1h-1zM239 856h1v1h-1zM242 856h1v1h-1zM245 856h1v1h-1zM251 856h1v1h-1zM254 856h5v1h-5zM242 857h1v1h-1zM249 857h3v1h-3zM256 857h1v1h-1zM237 858h11v1h-11zM249 858h1v1h-1zM253 858h7v1h-7zM240 859h1v1h-1zM243 859h1v1h-1zM249 859h1v1h-1zM253 859h1v1h-1zM256 859h1v1h-1zM259 859h1v1h-1zM240 860h1v1h-1zM243 860h1v1h-1zM249 860h3v1h-3zM253 860h1v1h-1zM256 860h1v1h-1zM259 860h1v1h-1zM240 861h1v1h-1zM243 861h1v1h-1zM247 861h1v1h-1zM251 861h1v1h-1zM253 861h6v1h-6zM240 862h1v1h-1zM243 862h1v1h-1zM247 862h1v1h-1zM251 862h1v1h-1zM256 862h1v1h-1zM259 862h1v1h-1zM239 863h1v1h-1zM243 863h1v1h-1zM247 863h1v1h-1zM251 863h1v1h-1zM256 863h4v1h-4zM237 864h2v1h-2zM244 864h4v1h-4zM249 864h2v1h-2zM253 864h4v1h-4zM259 864h1v1h-1zM263 857h2v2h-2zM263 861h2v2h-2z" fill="#000"/>
<path d="M945 40h1v1h-1zM975 40h1v1h-1zM919 41h3v1h-3zM924 41h1v1h-1zM927 41h1v1h-1zM929 41h1v1h-1zM931 41h1v1h-1zM944 41h1v1h-1zM949 41h1v1h-1zM955 41h1v1h-1zM963 41h1v1h-1zM968 41h1v1h-1zM976 41h1v1h-1zM913 42h6v1h-6zM925 42h1v1h-1zM927 42h2v1h-2zM931 42h1v1h-1zM944 42h1v1h-1zM950 42h1v1h-1zM955 42h1v1h-1zM963 42h1v1h-1zM967 42h1v1h-1zM976 42h1v1h-1zM916 43h1v1h-1zM920 43h1v1h-1zM924 43h6v1h-6zM931 43h4v1h-4zM943 43h1v1h-1zM948 43h1v1h-1zM952 43h7v1h-7zM963 43h1v1h-1zM966 43h1v1h-1zM977 43h1v1h-1zM914 44h6v1h-6zM926 44h2v1h-2zM930 44h2v1h-2zM933 44h1v1h-1zM943 44h1v1h-1zM949 44h1v1h-1zM952 44h1v1h-1zM955 44h1v1h-1zM958 44h1v1h-1zM963 44h1v1h-1zM965 44h1v1h-1zM977 44h1v1h-1zM917 45h1v1h-1zM925 45h1v1h-1zM927 45h2v1h-2zM931 45h1v1h-1zM933 45h1v1h-1zM943 45h1v1h-1zM951 45h2v1h-2zM955 45h1v1h-1zM963 45h2v1h-2zM977 45h1v1h-1zM916 46h1v1h-1zM920 46h1v1h-1zM924 46h1v1h-1zM927 46h1v1h-1zM929 46h1v1h-1zM931 46h1v1h-1zM933 46h1v1h-1zM943 46h1v1h-1zM950 46h1v1h-1zM952 46h6v1h-6zM961 46h10v1h-10zM977 46h1v1h-1zM913 47h9v1h-9zM924 47h6v1h-6zM931 47h1v1h-1zM933 47h1v1h-1zM943 47h1v1h-1zM950 47h1v1h-1zM952 47h1v1h-1zM957 47h1v1h-1zM963 47h1v1h-1zM965 47h1v1h-1zM977 47h1v1h-1zM917 48h1v1h-1zM921 48h1v1h-1zM926 48h1v1h-1zM928 48h1v1h-1zM931 48h1v1h-1zM933 48h1v1h-1zM943 48h1v1h-1zM948 48h2v1h-2zM952 48h1v1h-1zM954 48h1v1h-1zM956 48h1v1h-1zM963 48h1v1h-1zM966 48h1v1h-1zM977 48h1v1h-1zM915 49h1v1h-1zM917 49h1v1h-1zM919 49h1v1h-1zM925 49h2v1h-2zM928 49h1v1h-1zM932 49h1v1h-1zM944 49h1v1h-1zM949 49h1v1h-1zM952 49h1v1h-1zM955 49h1v1h-1zM963 49h1v1h-1zM967 49h1v1h-1zM976 49h1v1h-1zM914 50h1v1h-1zM917 50h1v1h-1zM920 50h1v1h-1zM927 50h1v1h-1zM931 50h1v1h-1zM933 50h1v1h-1zM944 50h1v1h-1zM949 50h1v1h-1zM951 50h1v1h-1zM954 50h1v1h-1zM956 50h1v1h-1zM963 50h1v1h-1zM965 50h1v1h-1zM968 50h1v1h-1zM976 50h1v1h-1zM913 51h1v1h-1zM916 51h2v1h-2zM921 51h1v1h-1zM924 51h3v1h-3zM928 51h3v1h-3zM934 51h1v1h-1zM945 51h1v1h-1zM949 51h2v1h-2zM952 51h2v1h-2zM957 51h2v1h-2zM963 51h2v1h-2zM969 51h2v1h-2zM975 51h1v1h-1z" fill="#000"/>
<path d="M1137 29h1v1h-1zM1143 29h1v1h-1zM1151 29h1v1h-1zM1156 29h1v1h-1zM1138 30h1v1h-1zM1143 30h1v1h-1zM1152 30h1v1h-1zM1155 30h1v1h-1zM1136 31h1v1h-1zM1140 31h7v1h-7zM1149 31h10v1h-10zM1137 32h1v1h-1zM1140 32h1v1h-1zM1143 32h1v1h-1zM1146 32h1v1h-1zM1139 33h2v1h-2zM1143 33h1v1h-1zM1150 33h4v1h-4zM1155 33h1v1h-1zM1157 33h1v1h-1zM1138 34h1v1h-1zM1140 34h6v1h-6zM1150 34h1v1h-1zM1153 34h1v1h-1zM1155 34h1v1h-1zM1157 34h1v1h-1zM1138 35h1v1h-1zM1140 35h1v1h-1zM1145 35h1v1h-1zM1150 35h4v1h-4zM1155 35h1v1h-1zM1157 35h1v1h-1zM1136 36h2v1h-2zM1140 36h1v1h-1zM1142 36h1v1h-1zM1144 36h1v1h-1zM1150 36h1v1h-1zM1153 36h1v1h-1zM1155 36h1v1h-1zM1157 36h1v1h-1zM1137 37h1v1h-1zM1140 37h1v1h-1zM1143 37h1v1h-1zM1150 37h4v1h-4zM1155 37h1v1h-1zM1157 37h1v1h-1zM1137 38h1v1h-1zM1139 38h1v1h-1zM1142 38h1v1h-1zM1144 38h1v1h-1zM1150 38h1v1h-1zM1153 38h1v1h-1zM1157 38h1v1h-1zM1137 39h2v1h-2zM1140 39h2v1h-2zM1145 39h2v1h-2zM1150 39h1v1h-1zM1152 39h2v1h-2zM1155 39h3v1h-3z" fill="#000"/>
<path d="M1168 29h1v1h-1zM1172 29h1v1h-1zM1180 29h1v1h-1zM1183 29h1v1h-1zM1202 29h1v1h-1zM1208 29h1v1h-1zM1216 29h1v1h-1zM1221 29h1v1h-1zM1169 30h1v1h-1zM1171 30h1v1h-1zM1180 30h1v1h-1zM1184 30h1v1h-1zM1203 30h1v1h-1zM1208 30h1v1h-1zM1216 30h1v1h-1zM1220 30h1v1h-1zM1166 31h9v1h-9zM1179 31h1v1h-1zM1201 31h1v1h-1zM1205 31h7v1h-7zM1216 31h1v1h-1zM1219 31h1v1h-1zM1166 32h1v1h-1zM1170 32h1v1h-1zM1174 32h1v1h-1zM1179 32h1v1h-1zM1181 32h7v1h-7zM1202 32h1v1h-1zM1205 32h1v1h-1zM1208 32h1v1h-1zM1211 32h1v1h-1zM1216 32h1v1h-1zM1218 32h1v1h-1zM1166 33h9v1h-9zM1178 33h2v1h-2zM1204 33h2v1h-2zM1208 33h1v1h-1zM1216 33h2v1h-2zM1166 34h1v1h-1zM1170 34h1v1h-1zM1174 34h1v1h-1zM1177 34h1v1h-1zM1179 34h1v1h-1zM1182 34h1v1h-1zM1186 34h1v1h-1zM1203 34h1v1h-1zM1205 34h6v1h-6zM1214 34h10v1h-10zM1166 35h9v1h-9zM1179 35h1v1h-1zM1183 35h1v1h-1zM1186 35h1v1h-1zM1203 35h1v1h-1zM1205 35h1v1h-1zM1210 35h1v1h-1zM1216 35h1v1h-1zM1218 35h1v1h-1zM1170 36h1v1h-1zM1179 36h1v1h-1zM1183 36h1v1h-1zM1185 36h1v1h-1zM1201 36h2v1h-2zM1205 36h1v1h-1zM1207 36h1v1h-1zM1209 36h1v1h-1zM1216 36h1v1h-1zM1219 36h1v1h-1zM1165 37h11v1h-11zM1179 37h1v1h-1zM1185 37h1v1h-1zM1202 37h1v1h-1zM1205 37h1v1h-1zM1208 37h1v1h-1zM1216 37h1v1h-1zM1220 37h1v1h-1zM1170 38h1v1h-1zM1179 38h1v1h-1zM1184 38h1v1h-1zM1202 38h1v1h-1zM1204 38h1v1h-1zM1207 38h1v1h-1zM1209 38h1v1h-1zM1216 38h1v1h-1zM1218 38h1v1h-1zM1221 38h1v1h-1zM1170 39h1v1h-1zM1179 39h1v1h-1zM1181 39h7v1h-7zM1202 39h2v1h-2zM1205 39h2v1h-2zM1210 39h2v1h-2zM1216 39h2v1h-2zM1222 39h2v1h-2zM1191 32h2v2h-2zM1191 36h2v2h-2z" fill="#000"/>
<path d="M1178 476h1v1h-1zM1181 476h5v1h-5zM1195 476h1v1h-1zM1199 476h1v1h-1zM1201 476h5v1h-5zM1209 476h1v1h-1zM1213 476h7v1h-7zM1178 477h1v1h-1zM1181 477h1v1h-1zM1185 477h1v1h-1zM1187 477h4v1h-4zM1195 477h1v1h-1zM1200 477h2v1h-2zM1205 477h1v1h-1zM1207 477h1v1h-1zM1209 477h1v1h-1zM1213 477h1v1h-1zM1219 477h1v1h-1zM1176 478h6v1h-6zM1185 478h1v1h-1zM1190 478h8v1h-8zM1201 478h1v1h-1zM1203 478h1v1h-1zM1205 478h1v1h-1zM1207 478h1v1h-1zM1209 478h1v1h-1zM1213 478h7v1h-7zM1178 479h1v1h-1zM1181 479h5v1h-5zM1187 479h1v1h-1zM1190 479h1v1h-1zM1195 479h1v1h-1zM1199 479h1v1h-1zM1201 479h1v1h-1zM1203 479h1v1h-1zM1205 479h1v1h-1zM1207 479h1v1h-1zM1209 479h1v1h-1zM1213 479h1v1h-1zM1219 479h1v1h-1zM1178 480h1v1h-1zM1181 480h1v1h-1zM1185 480h1v1h-1zM1188 480h1v1h-1zM1190 480h1v1h-1zM1195 480h1v1h-1zM1200 480h2v1h-2zM1203 480h1v1h-1zM1205 480h1v1h-1zM1207 480h1v1h-1zM1209 480h1v1h-1zM1211 480h11v1h-11zM1177 481h3v1h-3zM1181 481h1v1h-1zM1185 481h1v1h-1zM1189 481h1v1h-1zM1192 481h1v1h-1zM1195 481h1v1h-1zM1201 481h1v1h-1zM1203 481h1v1h-1zM1205 481h1v1h-1zM1207 481h1v1h-1zM1209 481h1v1h-1zM1213 481h1v1h-1zM1216 481h1v1h-1zM1219 481h1v1h-1zM1176 482h1v1h-1zM1178 482h1v1h-1zM1180 482h6v1h-6zM1189 482h1v1h-1zM1193 482h1v1h-1zM1195 482h1v1h-1zM1201 482h1v1h-1zM1203 482h1v1h-1zM1205 482h1v1h-1zM1207 482h1v1h-1zM1209 482h1v1h-1zM1213 482h7v1h-7zM1175 483h1v1h-1zM1178 483h1v1h-1zM1181 483h1v1h-1zM1185 483h1v1h-1zM1188 483h1v1h-1zM1190 483h1v1h-1zM1195 483h1v1h-1zM1199 483h2v1h-2zM1203 483h1v1h-1zM1207 483h1v1h-1zM1209 483h1v1h-1zM1213 483h1v1h-1zM1216 483h1v1h-1zM1219 483h1v1h-1zM1178 484h1v1h-1zM1181 484h1v1h-1zM1185 484h1v1h-1zM1188 484h1v1h-1zM1190 484h1v1h-1zM1195 484h1v1h-1zM1200 484h1v1h-1zM1202 484h1v1h-1zM1204 484h1v1h-1zM1209 484h1v1h-1zM1212 484h9v1h-9zM1178 485h1v1h-1zM1181 485h5v1h-5zM1187 485h1v1h-1zM1193 485h1v1h-1zM1195 485h1v1h-1zM1200 485h2v1h-2zM1205 485h1v1h-1zM1209 485h1v1h-1zM1216 485h1v1h-1zM1178 486h1v1h-1zM1181 486h1v1h-1zM1185 486h1v1h-1zM1194 486h1v1h-1zM1200 486h1v1h-1zM1207 486h3v1h-3zM1211 486h11v1h-11z" fill="#000"/>
<path d="M1269 476h1v1h-1zM1272 476h5v1h-5zM1281 476h1v1h-1zM1287 476h1v1h-1zM1269 477h2v1h-2zM1273 477h1v1h-1zM1280 477h1v1h-1zM1282 477h1v1h-1zM1285 477h1v1h-1zM1287 477h1v1h-1zM1268 478h1v1h-1zM1270 478h1v1h-1zM1272 478h5v1h-5zM1279 478h1v1h-1zM1283 478h1v1h-1zM1286 478h2v1h-2zM1268 479h1v1h-1zM1270 479h3v1h-3zM1276 479h1v1h-1zM1278 479h1v1h-1zM1280 479h3v1h-3zM1287 479h1v1h-1zM1267 480h2v1h-2zM1270 480h1v1h-1zM1272 480h1v1h-1zM1274 480h1v1h-1zM1276 480h1v1h-1zM1281 480h1v1h-1zM1284 480h1v1h-1zM1287 480h1v1h-1zM1266 481h1v1h-1zM1268 481h1v1h-1zM1270 481h1v1h-1zM1272 481h1v1h-1zM1274 481h1v1h-1zM1276 481h1v1h-1zM1279 481h5v1h-5zM1285 481h1v1h-1zM1287 481h1v1h-1zM1268 482h1v1h-1zM1270 482h1v1h-1zM1272 482h1v1h-1zM1274 482h1v1h-1zM1276 482h1v1h-1zM1281 482h1v1h-1zM1287 482h2v1h-2zM1268 483h1v1h-1zM1270 483h3v1h-3zM1274 483h1v1h-1zM1276 483h1v1h-1zM1279 483h1v1h-1zM1281 483h1v1h-1zM1283 483h1v1h-1zM1285 483h3v1h-3zM1268 484h1v1h-1zM1270 484h1v1h-1zM1272 484h1v1h-1zM1274 484h1v1h-1zM1276 484h1v1h-1zM1279 484h1v1h-1zM1281 484h1v1h-1zM1284 484h1v1h-1zM1287 484h1v1h-1zM1268 485h1v1h-1zM1273 485h1v1h-1zM1275 485h1v1h-1zM1278 485h1v1h-1zM1281 485h1v1h-1zM1284 485h1v1h-1zM1287 485h1v1h-1zM1268 486h1v1h-1zM1271 486h2v1h-2zM1276 486h1v1h-1zM1280 486h2v1h-2zM1287 486h1v1h-1z" fill="#000"/>
<path d="M1348 475h1v1h-1zM1358 475h1v1h-1zM1360 475h1v1h-1zM1343 476h11v1h-11zM1357 476h1v1h-1zM1361 476h1v1h-1zM1345 477h1v1h-1zM1347 477h1v1h-1zM1349 477h1v1h-1zM1351 477h1v1h-1zM1356 477h10v1h-10zM1345 478h1v1h-1zM1348 478h1v1h-1zM1351 478h1v1h-1zM1355 478h1v1h-1zM1357 478h1v1h-1zM1361 478h1v1h-1zM1345 479h1v1h-1zM1347 479h1v1h-1zM1349 479h1v1h-1zM1351 479h1v1h-1zM1357 479h8v1h-8zM1345 480h7v1h-7zM1357 480h1v1h-1zM1361 480h1v1h-1zM1348 481h1v1h-1zM1357 481h8v1h-8zM1344 482h9v1h-9zM1357 482h1v1h-1zM1361 482h1v1h-1zM1344 483h1v1h-1zM1347 483h1v1h-1zM1350 483h1v1h-1zM1352 483h1v1h-1zM1357 483h9v1h-9zM1344 484h1v1h-1zM1346 484h5v1h-5zM1352 484h1v1h-1zM1356 484h1v1h-1zM1358 484h1v1h-1zM1361 484h1v1h-1zM1364 484h1v1h-1zM1344 485h1v1h-1zM1351 485h2v1h-2zM1355 485h1v1h-1zM1359 485h1v1h-1zM1362 485h1v1h-1zM1365 485h1v1h-1z" fill="#000"/>
<path d="M1145 528h1v1h-1zM1148 528h1v1h-1zM1152 528h1v1h-1zM1157 528h1v1h-1zM1163 528h1v1h-1zM1145 529h1v1h-1zM1149 529h1v1h-1zM1151 529h1v1h-1zM1158 529h1v1h-1zM1162 529h1v1h-1zM1145 530h1v1h-1zM1147 530h7v1h-7zM1155 530h11v1h-11zM1143 531h5v1h-5zM1150 531h1v1h-1zM1153 531h1v1h-1zM1158 531h1v1h-1zM1162 531h1v1h-1zM1145 532h1v1h-1zM1147 532h1v1h-1zM1149 532h3v1h-3zM1153 532h1v1h-1zM1157 532h1v1h-1zM1163 532h1v1h-1zM1145 533h1v1h-1zM1147 533h1v1h-1zM1150 533h1v1h-1zM1153 533h1v1h-1zM1156 533h1v1h-1zM1164 533h1v1h-1zM1145 534h1v1h-1zM1147 534h7v1h-7zM1155 534h1v1h-1zM1157 534h7v1h-7zM1165 534h1v1h-1zM1145 535h1v1h-1zM1148 535h1v1h-1zM1152 535h1v1h-1zM1157 535h1v1h-1zM1159 535h1v1h-1zM1161 535h1v1h-1zM1163 535h1v1h-1zM1145 536h2v1h-2zM1148 536h5v1h-5zM1157 536h1v1h-1zM1159 536h1v1h-1zM1161 536h1v1h-1zM1163 536h1v1h-1zM1143 537h2v1h-2zM1148 537h1v1h-1zM1152 537h1v1h-1zM1157 537h1v1h-1zM1159 537h1v1h-1zM1161 537h1v1h-1zM1163 537h1v1h-1zM1148 538h5v1h-5zM1155 538h11v1h-11zM1169 531h2v2h-2zM1169 535h2v2h-2z" fill="#000"/>
<path d="M1206 529h1v1h-1zM1211 529h2v1h-2zM1206 530h5v1h-5zM1205 531h1v1h-1zM1207 531h1v1h-1zM1210 531h1v1h-1zM1205 532h1v1h-1zM1207 532h1v1h-1zM1210 532h1v1h-1zM1204 533h2v1h-2zM1207 533h1v1h-1zM1210 533h1v1h-1zM1203 534h1v1h-1zM1205 534h1v1h-1zM1207 534h7v1h-7zM1205 535h1v1h-1zM1207 535h1v1h-1zM1210 535h1v1h-1zM1205 536h1v1h-1zM1207 536h1v1h-1zM1210 536h1v1h-1zM1213 536h1v1h-1zM1205 537h1v1h-1zM1207 537h1v1h-1zM1209 537h1v1h-1zM1211 537h1v1h-1zM1213 537h1v1h-1zM1205 538h1v1h-1zM1207 538h2v1h-2zM1210 538h1v1h-1zM1212 538h2v1h-2zM1205 539h1v1h-1zM1207 539h1v1h-1zM1211 539h1v1h-1zM1213 539h1v1h-1z" fill="#000"/>
<path d="M1253 529h1v1h-1zM1248 530h11v1h-11zM1251 532h5v1h-5zM1251 533h1v1h-1zM1255 533h1v1h-1zM1249 534h9v1h-9zM1249 535h1v1h-1zM1257 535h1v1h-1zM1249 536h1v1h-1zM1251 536h5v1h-5zM1257 536h1v1h-1zM1249 537h1v1h-1zM1251 537h1v1h-1zM1255 537h1v1h-1zM1257 537h1v1h-1zM1249 538h1v1h-1zM1251 538h5v1h-5zM1257 538h1v1h-1zM1249 539h1v1h-1zM1256 539h2v1h-2z" fill="#000"/>
<path d="M1204 566h1v1h-1zM1210 566h1v1h-1zM1217 566h1v1h-1zM1220 566h5v1h-5zM1204 567h1v1h-1zM1210 567h3v1h-3zM1215 567h1v1h-1zM1217 567h1v1h-1zM1222 567h1v1h-1zM1202 568h5v1h-5zM1210 568h1v1h-1zM1215 568h1v1h-1zM1217 568h8v1h-8zM1202 569h1v1h-1zM1204 569h1v1h-1zM1206 569h1v1h-1zM1208 569h5v1h-5zM1215 569h1v1h-1zM1217 569h1v1h-1zM1220 569h1v1h-1zM1224 569h1v1h-1zM1202 570h1v1h-1zM1204 570h1v1h-1zM1206 570h1v1h-1zM1208 570h1v1h-1zM1212 570h1v1h-1zM1214 570h7v1h-7zM1222 570h1v1h-1zM1224 570h1v1h-1zM1202 571h1v1h-1zM1204 571h1v1h-1zM1206 571h1v1h-1zM1208 571h1v1h-1zM1210 571h1v1h-1zM1212 571h1v1h-1zM1217 571h1v1h-1zM1220 571h1v1h-1zM1222 571h1v1h-1zM1224 571h1v1h-1zM1202 572h1v1h-1zM1204 572h1v1h-1zM1206 572h1v1h-1zM1208 572h1v1h-1zM1210 572h1v1h-1zM1212 572h1v1h-1zM1215 572h1v1h-1zM1217 572h1v1h-1zM1219 572h2v1h-2zM1222 572h1v1h-1zM1224 572h1v1h-1zM1202 573h1v1h-1zM1204 573h1v1h-1zM1206 573h1v1h-1zM1208 573h1v1h-1zM1210 573h1v1h-1zM1212 573h1v1h-1zM1215 573h1v1h-1zM1217 573h2v1h-2zM1220 573h1v1h-1zM1222 573h1v1h-1zM1224 573h1v1h-1zM1202 574h1v1h-1zM1204 574h3v1h-3zM1210 574h1v1h-1zM1214 574h1v1h-1zM1217 574h1v1h-1zM1220 574h1v1h-1zM1222 574h1v1h-1zM1224 574h1v1h-1zM1204 575h1v1h-1zM1209 575h1v1h-1zM1211 575h1v1h-1zM1216 575h1v1h-1zM1221 575h1v1h-1zM1223 575h1v1h-1zM1204 576h1v1h-1zM1207 576h2v1h-2zM1212 576h1v1h-1zM1214 576h2v1h-2zM1219 576h2v1h-2zM1224 576h1v1h-1zM1228 569h2v2h-2zM1228 573h2v2h-2z" fill="#000"/>
<path d="M1150 587h6v1h-6zM1163 587h1v1h-1zM1178 587h1v1h-1zM1184 587h1v1h-1zM1187 587h6v1h-6zM1146 588h3v1h-3zM1150 588h1v1h-1zM1155 588h1v1h-1zM1159 588h1v1h-1zM1163 588h1v1h-1zM1167 588h1v1h-1zM1170 588h4v1h-4zM1178 588h1v1h-1zM1185 588h1v1h-1zM1192 588h1v1h-1zM1146 589h1v1h-1zM1148 589h1v1h-1zM1150 589h6v1h-6zM1160 589h1v1h-1zM1163 589h1v1h-1zM1166 589h1v1h-1zM1170 589h1v1h-1zM1173 589h8v1h-8zM1183 589h1v1h-1zM1192 589h1v1h-1zM1146 590h1v1h-1zM1148 590h1v1h-1zM1150 590h1v1h-1zM1155 590h1v1h-1zM1163 590h1v1h-1zM1170 590h1v1h-1zM1173 590h1v1h-1zM1178 590h1v1h-1zM1183 590h1v1h-1zM1186 590h4v1h-4zM1192 590h1v1h-1zM1146 591h11v1h-11zM1158 591h11v1h-11zM1170 591h1v1h-1zM1173 591h1v1h-1zM1175 591h1v1h-1zM1178 591h1v1h-1zM1183 591h1v1h-1zM1186 591h1v1h-1zM1189 591h1v1h-1zM1192 591h1v1h-1zM1146 592h1v1h-1zM1148 592h1v1h-1zM1152 592h1v1h-1zM1154 592h1v1h-1zM1161 592h1v1h-1zM1164 592h1v1h-1zM1170 592h4v1h-4zM1176 592h1v1h-1zM1178 592h1v1h-1zM1183 592h1v1h-1zM1186 592h4v1h-4zM1192 592h1v1h-1zM1146 593h1v1h-1zM1148 593h9v1h-9zM1161 593h1v1h-1zM1164 593h1v1h-1zM1170 593h1v1h-1zM1173 593h1v1h-1zM1176 593h1v1h-1zM1178 593h1v1h-1zM1183 593h1v1h-1zM1186 593h1v1h-1zM1189 593h1v1h-1zM1192 593h1v1h-1zM1146 594h3v1h-3zM1151 594h1v1h-1zM1153 594h1v1h-1zM1155 594h1v1h-1zM1161 594h1v1h-1zM1164 594h1v1h-1zM1168 594h1v1h-1zM1170 594h1v1h-1zM1173 594h1v1h-1zM1178 594h1v1h-1zM1183 594h1v1h-1zM1186 594h1v1h-1zM1189 594h1v1h-1zM1192 594h1v1h-1zM1146 595h1v1h-1zM1148 595h1v1h-1zM1150 595h1v1h-1zM1152 595h3v1h-3zM1156 595h1v1h-1zM1161 595h1v1h-1zM1164 595h1v1h-1zM1168 595h1v1h-1zM1170 595h1v1h-1zM1173 595h1v1h-1zM1178 595h1v1h-1zM1183 595h1v1h-1zM1186 595h4v1h-4zM1192 595h1v1h-1zM1151 596h1v1h-1zM1153 596h1v1h-1zM1155 596h1v1h-1zM1160 596h1v1h-1zM1164 596h1v1h-1zM1168 596h1v1h-1zM1170 596h4v1h-4zM1178 596h1v1h-1zM1183 596h1v1h-1zM1192 596h1v1h-1zM1150 597h1v1h-1zM1152 597h2v1h-2zM1156 597h1v1h-1zM1158 597h2v1h-2zM1165 597h4v1h-4zM1176 597h3v1h-3zM1183 597h1v1h-1zM1190 597h3v1h-3z" fill="#000"/>
<path d="M1162 772h1v1h-1zM1174 772h1v1h-1zM1183 772h1v1h-1zM1188 772h1v1h-1zM1198 772h1v1h-1zM1158 773h1v1h-1zM1162 773h1v1h-1zM1166 773h1v1h-1zM1174 773h1v1h-1zM1184 773h1v1h-1zM1188 773h1v1h-1zM1198 773h1v1h-1zM1159 774h1v1h-1zM1162 774h1v1h-1zM1165 774h1v1h-1zM1174 774h5v1h-5zM1181 774h6v1h-6zM1188 774h4v1h-4zM1198 774h1v1h-1zM1162 775h1v1h-1zM1174 775h1v1h-1zM1183 775h1v1h-1zM1187 775h1v1h-1zM1190 775h1v1h-1zM1193 775h11v1h-11zM1157 776h11v1h-11zM1171 776h7v1h-7zM1183 776h1v1h-1zM1186 776h1v1h-1zM1188 776h1v1h-1zM1190 776h1v1h-1zM1198 776h1v1h-1zM1160 777h1v1h-1zM1163 777h1v1h-1zM1171 777h1v1h-1zM1177 777h1v1h-1zM1183 777h3v1h-3zM1188 777h1v1h-1zM1190 777h1v1h-1zM1198 777h1v1h-1zM1160 778h1v1h-1zM1163 778h1v1h-1zM1171 778h1v1h-1zM1177 778h1v1h-1zM1183 778h1v1h-1zM1185 778h1v1h-1zM1188 778h1v1h-1zM1190 778h1v1h-1zM1197 778h1v1h-1zM1199 778h1v1h-1zM1160 779h1v1h-1zM1163 779h1v1h-1zM1167 779h1v1h-1zM1171 779h7v1h-7zM1183 779h1v1h-1zM1185 779h1v1h-1zM1189 779h1v1h-1zM1197 779h1v1h-1zM1199 779h1v1h-1zM1160 780h1v1h-1zM1163 780h1v1h-1zM1167 780h1v1h-1zM1182 780h1v1h-1zM1185 780h1v1h-1zM1188 780h2v1h-2zM1196 780h1v1h-1zM1200 780h1v1h-1zM1159 781h1v1h-1zM1163 781h1v1h-1zM1167 781h1v1h-1zM1170 781h1v1h-1zM1172 781h1v1h-1zM1175 781h1v1h-1zM1178 781h1v1h-1zM1182 781h1v1h-1zM1185 781h1v1h-1zM1187 781h1v1h-1zM1190 781h1v1h-1zM1195 781h1v1h-1zM1201 781h1v1h-1zM1157 782h2v1h-2zM1164 782h4v1h-4zM1169 782h1v1h-1zM1173 782h1v1h-1zM1176 782h1v1h-1zM1179 782h1v1h-1zM1181 782h1v1h-1zM1184 782h1v1h-1zM1186 782h1v1h-1zM1191 782h1v1h-1zM1193 782h2v1h-2zM1202 782h2v1h-2z" fill="#000"/>
<path d="M1160 802h1v1h-1zM1168 802h1v1h-1zM1171 802h1v1h-1zM1173 802h1v1h-1zM1175 802h1v1h-1zM1181 802h1v1h-1zM1185 802h4v1h-4zM1193 802h9v1h-9zM1159 803h1v1h-1zM1163 803h1v1h-1zM1169 803h1v1h-1zM1171 803h2v1h-2zM1175 803h1v1h-1zM1182 803h1v1h-1zM1185 803h1v1h-1zM1188 803h1v1h-1zM1193 803h1v1h-1zM1196 803h1v1h-1zM1198 803h1v1h-1zM1201 803h1v1h-1zM1158 804h7v1h-7zM1168 804h6v1h-6zM1175 804h4v1h-4zM1185 804h1v1h-1zM1188 804h1v1h-1zM1193 804h9v1h-9zM1160 805h1v1h-1zM1170 805h2v1h-2zM1174 805h2v1h-2zM1177 805h1v1h-1zM1184 805h1v1h-1zM1188 805h3v1h-3zM1197 805h1v1h-1zM1156 806h11v1h-11zM1169 806h1v1h-1zM1171 806h2v1h-2zM1175 806h1v1h-1zM1177 806h1v1h-1zM1180 806h3v1h-3zM1192 806h11v1h-11zM1158 807h1v1h-1zM1161 807h1v1h-1zM1164 807h1v1h-1zM1168 807h1v1h-1zM1171 807h1v1h-1zM1173 807h1v1h-1zM1175 807h1v1h-1zM1177 807h1v1h-1zM1182 807h1v1h-1zM1184 807h6v1h-6zM1194 807h1v1h-1zM1200 807h1v1h-1zM1156 808h2v1h-2zM1159 808h2v1h-2zM1165 808h2v1h-2zM1168 808h6v1h-6zM1175 808h1v1h-1zM1177 808h1v1h-1zM1182 808h1v1h-1zM1185 808h1v1h-1zM1189 808h1v1h-1zM1194 808h7v1h-7zM1161 809h2v1h-2zM1170 809h1v1h-1zM1172 809h1v1h-1zM1175 809h1v1h-1zM1177 809h1v1h-1zM1182 809h1v1h-1zM1186 809h1v1h-1zM1188 809h1v1h-1zM1194 809h1v1h-1zM1200 809h1v1h-1zM1159 810h2v1h-2zM1164 810h1v1h-1zM1169 810h2v1h-2zM1172 810h1v1h-1zM1176 810h1v1h-1zM1182 810h2v1h-2zM1187 810h1v1h-1zM1194 810h7v1h-7zM1162 811h2v1h-2zM1171 811h1v1h-1zM1175 811h1v1h-1zM1177 811h1v1h-1zM1182 811h1v1h-1zM1186 811h1v1h-1zM1188 811h1v1h-1zM1194 811h1v1h-1zM1200 811h1v1h-1zM1158 812h4v1h-4zM1168 812h3v1h-3zM1172 812h3v1h-3zM1178 812h1v1h-1zM1183 812h3v1h-3zM1189 812h2v1h-2zM1192 812h11v1h-11z" fill="#000"/>
<path d="M1157 834h9v1h-9zM1170 834h1v1h-1zM1175 834h1v1h-1zM1185 834h4v1h-4zM1195 834h1v1h-1zM1197 834h1v1h-1zM1159 835h1v1h-1zM1163 835h1v1h-1zM1170 835h1v1h-1zM1175 835h1v1h-1zM1181 835h4v1h-4zM1189 835h1v1h-1zM1194 835h1v1h-1zM1198 835h1v1h-1zM1159 836h1v1h-1zM1163 836h1v1h-1zM1168 836h5v1h-5zM1174 836h1v1h-1zM1177 836h1v1h-1zM1182 836h1v1h-1zM1185 836h1v1h-1zM1188 836h1v1h-1zM1193 836h10v1h-10zM1159 837h1v1h-1zM1163 837h1v1h-1zM1170 837h1v1h-1zM1172 837h1v1h-1zM1174 837h1v1h-1zM1178 837h1v1h-1zM1183 837h1v1h-1zM1187 837h1v1h-1zM1192 837h1v1h-1zM1194 837h1v1h-1zM1197 837h1v1h-1zM1159 838h1v1h-1zM1163 838h1v1h-1zM1170 838h1v1h-1zM1172 838h7v1h-7zM1185 838h1v1h-1zM1194 838h8v1h-8zM1156 839h11v1h-11zM1169 839h1v1h-1zM1172 839h1v1h-1zM1180 839h11v1h-11zM1194 839h1v1h-1zM1197 839h1v1h-1zM1159 840h1v1h-1zM1163 840h1v1h-1zM1169 840h1v1h-1zM1171 840h1v1h-1zM1174 840h5v1h-5zM1184 840h3v1h-3zM1194 840h8v1h-8zM1158 841h1v1h-1zM1163 841h1v1h-1zM1170 841h2v1h-2zM1174 841h1v1h-1zM1178 841h1v1h-1zM1183 841h1v1h-1zM1185 841h1v1h-1zM1187 841h1v1h-1zM1194 841h1v1h-1zM1197 841h1v1h-1zM1158 842h1v1h-1zM1163 842h1v1h-1zM1170 842h1v1h-1zM1172 842h1v1h-1zM1174 842h1v1h-1zM1178 842h1v1h-1zM1182 842h1v1h-1zM1185 842h1v1h-1zM1188 842h1v1h-1zM1192 842h11v1h-11zM1157 843h1v1h-1zM1163 843h1v1h-1zM1169 843h1v1h-1zM1172 843h1v1h-1zM1174 843h5v1h-5zM1181 843h1v1h-1zM1185 843h1v1h-1zM1189 843h2v1h-2zM1195 843h1v1h-1zM1197 843h1v1h-1zM1199 843h1v1h-1zM1156 844h1v1h-1zM1163 844h1v1h-1zM1168 844h1v1h-1zM1174 844h1v1h-1zM1178 844h1v1h-1zM1180 844h1v1h-1zM1185 844h1v1h-1zM1190 844h1v1h-1zM1192 844h3v1h-3zM1197 844h1v1h-1zM1200 844h3v1h-3z" fill="#000"/>
<path d="M1292 771h1v1h-1zM1294 771h5v1h-5zM1305 771h1v1h-1zM1313 771h4v1h-4zM1318 771h1v1h-1zM1328 771h1v1h-1zM1330 771h5v1h-5zM1292 772h1v1h-1zM1294 772h1v1h-1zM1298 772h1v1h-1zM1301 772h11v1h-11zM1313 772h1v1h-1zM1316 772h1v1h-1zM1318 772h5v1h-5zM1327 772h1v1h-1zM1333 772h1v1h-1zM1291 773h1v1h-1zM1294 773h1v1h-1zM1298 773h1v1h-1zM1304 773h1v1h-1zM1313 773h1v1h-1zM1316 773h1v1h-1zM1318 773h1v1h-1zM1322 773h1v1h-1zM1326 773h1v1h-1zM1329 773h1v1h-1zM1332 773h1v1h-1zM1291 774h1v1h-1zM1294 774h5v1h-5zM1303 774h1v1h-1zM1305 774h6v1h-6zM1313 774h1v1h-1zM1316 774h2v1h-2zM1319 774h1v1h-1zM1321 774h1v1h-1zM1325 774h1v1h-1zM1328 774h1v1h-1zM1331 774h1v1h-1zM1333 774h1v1h-1zM1290 775h2v1h-2zM1296 775h1v1h-1zM1303 775h1v1h-1zM1309 775h1v1h-1zM1313 775h4v1h-4zM1320 775h1v1h-1zM1327 775h1v1h-1zM1330 775h1v1h-1zM1334 775h1v1h-1zM1289 776h1v1h-1zM1291 776h1v1h-1zM1293 776h7v1h-7zM1302 776h2v1h-2zM1308 776h1v1h-1zM1315 776h1v1h-1zM1319 776h1v1h-1zM1321 776h1v1h-1zM1326 776h2v1h-2zM1329 776h1v1h-1zM1335 776h1v1h-1zM1291 777h1v1h-1zM1296 777h1v1h-1zM1301 777h1v1h-1zM1303 777h9v1h-9zM1313 777h1v1h-1zM1315 777h2v1h-2zM1318 777h1v1h-1zM1322 777h1v1h-1zM1325 777h1v1h-1zM1327 777h1v1h-1zM1330 777h5v1h-5zM1291 778h1v1h-1zM1295 778h3v1h-3zM1303 778h1v1h-1zM1308 778h1v1h-1zM1313 778h1v1h-1zM1315 778h1v1h-1zM1317 778h7v1h-7zM1327 778h1v1h-1zM1332 778h1v1h-1zM1291 779h1v1h-1zM1294 779h1v1h-1zM1296 779h1v1h-1zM1298 779h1v1h-1zM1303 779h1v1h-1zM1308 779h1v1h-1zM1313 779h1v1h-1zM1315 779h1v1h-1zM1318 779h1v1h-1zM1322 779h1v1h-1zM1327 779h1v1h-1zM1332 779h1v1h-1zM1291 780h1v1h-1zM1293 780h1v1h-1zM1296 780h1v1h-1zM1299 780h1v1h-1zM1303 780h1v1h-1zM1308 780h1v1h-1zM1313 780h1v1h-1zM1315 780h2v1h-2zM1318 780h1v1h-1zM1322 780h1v1h-1zM1327 780h1v1h-1zM1332 780h1v1h-1zM1291 781h1v1h-1zM1296 781h1v1h-1zM1303 781h1v1h-1zM1306 781h3v1h-3zM1313 781h2v1h-2zM1318 781h5v1h-5zM1327 781h1v1h-1zM1329 781h7v1h-7z" fill="#000"/>
<path d="M1292 802h1v1h-1zM1294 802h5v1h-5zM1305 802h1v1h-1zM1313 802h1v1h-1zM1316 802h1v1h-1zM1318 802h1v1h-1zM1320 802h1v1h-1zM1327 802h1v1h-1zM1330 802h6v1h-6zM1292 803h1v1h-1zM1294 803h1v1h-1zM1298 803h1v1h-1zM1301 803h11v1h-11zM1314 803h1v1h-1zM1316 803h2v1h-2zM1320 803h1v1h-1zM1327 803h1v1h-1zM1330 803h1v1h-1zM1335 803h1v1h-1zM1291 804h1v1h-1zM1294 804h1v1h-1zM1298 804h1v1h-1zM1304 804h1v1h-1zM1313 804h6v1h-6zM1320 804h4v1h-4zM1325 804h6v1h-6zM1335 804h1v1h-1zM1291 805h1v1h-1zM1294 805h5v1h-5zM1303 805h1v1h-1zM1305 805h6v1h-6zM1315 805h2v1h-2zM1319 805h2v1h-2zM1322 805h1v1h-1zM1327 805h1v1h-1zM1330 805h6v1h-6zM1290 806h2v1h-2zM1296 806h1v1h-1zM1303 806h1v1h-1zM1309 806h1v1h-1zM1314 806h1v1h-1zM1316 806h2v1h-2zM1320 806h1v1h-1zM1322 806h1v1h-1zM1327 806h1v1h-1zM1329 806h2v1h-2zM1333 806h1v1h-1zM1289 807h1v1h-1zM1291 807h1v1h-1zM1293 807h7v1h-7zM1302 807h2v1h-2zM1308 807h1v1h-1zM1313 807h1v1h-1zM1316 807h1v1h-1zM1318 807h1v1h-1zM1320 807h1v1h-1zM1322 807h1v1h-1zM1327 807h2v1h-2zM1330 807h6v1h-6zM1291 808h1v1h-1zM1296 808h1v1h-1zM1301 808h1v1h-1zM1303 808h9v1h-9zM1313 808h6v1h-6zM1320 808h1v1h-1zM1322 808h1v1h-1zM1326 808h2v1h-2zM1330 808h1v1h-1zM1333 808h1v1h-1zM1291 809h1v1h-1zM1295 809h3v1h-3zM1303 809h1v1h-1zM1308 809h1v1h-1zM1315 809h1v1h-1zM1317 809h1v1h-1zM1320 809h1v1h-1zM1322 809h1v1h-1zM1325 809h1v1h-1zM1327 809h1v1h-1zM1330 809h6v1h-6zM1291 810h1v1h-1zM1294 810h1v1h-1zM1296 810h1v1h-1zM1298 810h1v1h-1zM1303 810h1v1h-1zM1308 810h1v1h-1zM1314 810h2v1h-2zM1317 810h1v1h-1zM1321 810h1v1h-1zM1327 810h1v1h-1zM1329 810h3v1h-3zM1335 810h1v1h-1zM1291 811h1v1h-1zM1293 811h1v1h-1zM1296 811h1v1h-1zM1299 811h1v1h-1zM1303 811h1v1h-1zM1308 811h1v1h-1zM1316 811h1v1h-1zM1320 811h1v1h-1zM1322 811h1v1h-1zM1325 811h1v1h-1zM1327 811h1v1h-1zM1329 811h1v1h-1zM1331 811h1v1h-1zM1335 811h1v1h-1zM1291 812h1v1h-1zM1296 812h1v1h-1zM1303 812h1v1h-1zM1306 812h3v1h-3zM1313 812h3v1h-3zM1317 812h3v1h-3zM1323 812h1v1h-1zM1326 812h1v1h-1zM1328 812h1v1h-1zM1331 812h5v1h-5z" fill="#000"/>
<path d="M1287 836h1v1h-1zM1291 836h6v1h-6zM1328 836h1v1h-1zM1288 837h1v1h-1zM1291 837h1v1h-1zM1296 837h1v1h-1zM1324 837h1v1h-1zM1328 837h1v1h-1zM1332 837h1v1h-1zM1288 838h1v1h-1zM1291 838h6v1h-6zM1324 838h1v1h-1zM1328 838h1v1h-1zM1332 838h1v1h-1zM1291 839h1v1h-1zM1296 839h1v1h-1zM1324 839h1v1h-1zM1328 839h1v1h-1zM1332 839h1v1h-1zM1287 840h2v1h-2zM1291 840h6v1h-6zM1324 840h9v1h-9zM1288 841h1v1h-1zM1291 841h1v1h-1zM1328 841h1v1h-1zM1288 842h1v1h-1zM1291 842h1v1h-1zM1293 842h2v1h-2zM1296 842h1v1h-1zM1323 842h1v1h-1zM1328 842h1v1h-1zM1333 842h1v1h-1zM1288 843h1v1h-1zM1291 843h1v1h-1zM1295 843h1v1h-1zM1323 843h1v1h-1zM1328 843h1v1h-1zM1333 843h1v1h-1zM1288 844h1v1h-1zM1291 844h3v1h-3zM1296 844h1v1h-1zM1323 844h1v1h-1zM1328 844h1v1h-1zM1333 844h1v1h-1zM1287 845h1v1h-1zM1289 845h2v1h-2zM1323 845h1v1h-1zM1328 845h1v1h-1zM1333 845h1v1h-1zM1287 846h1v1h-1zM1291 846h7v1h-7zM1323 846h11v1h-11z" fill="#000"/>
</svg>
</body></html>
